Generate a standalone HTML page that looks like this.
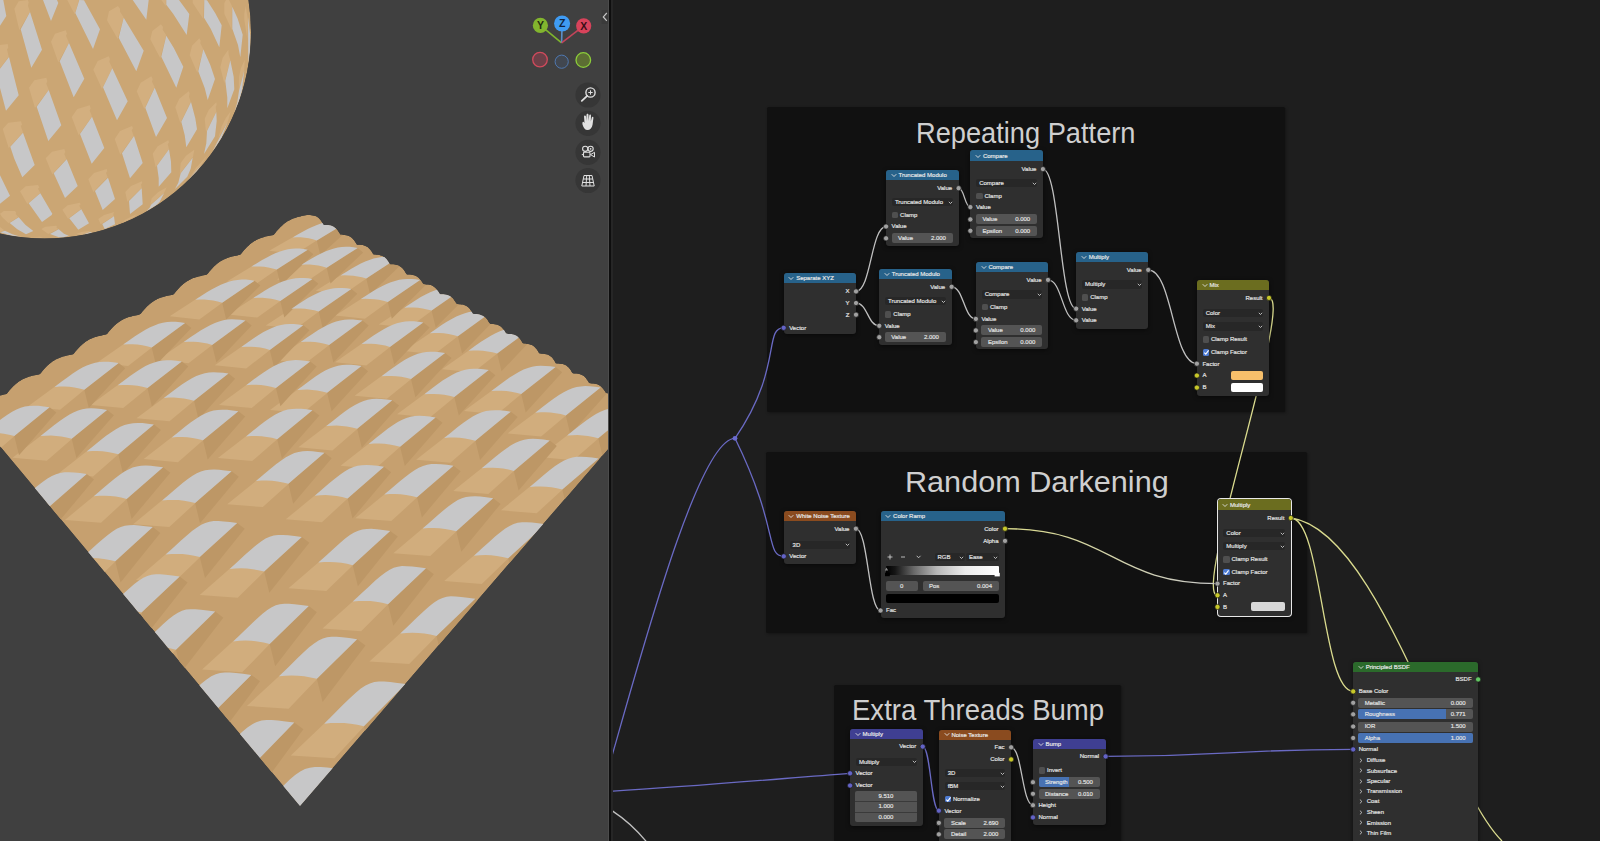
<!DOCTYPE html><html><head><meta charset="utf-8"><style>
html,body{margin:0;padding:0;width:1600px;height:841px;overflow:hidden;background:#1e1e1e;}
.t{position:absolute;white-space:nowrap;font-family:"Liberation Sans", sans-serif;line-height:1;-webkit-text-stroke:0.18px currentColor;}
.r{position:absolute;}
#vp{position:absolute;left:0;top:0;width:608px;height:841px;background:#404040;overflow:hidden;}
#ne{position:absolute;left:0;top:0;width:1600px;height:841px;}
.frame{position:absolute;background:#111111;border-radius:1.5px;box-shadow:1px 1px 3px rgba(0,0,0,0.35);}
.title{position:absolute;white-space:nowrap;font-family:"Liberation Sans", sans-serif;line-height:1;color:#cfcfcf;font-size:30px;transform-origin:0 0;}
</style></head><body>

<div id="vp"><svg width="608" height="841" viewBox="0 0 608 841" style="position:absolute;left:0;top:0">
<defs><clipPath id="pl"><path d="M-27.0 414.0 L-26.1 412.9 L-25.2 411.9 L-24.4 410.8 L-23.5 409.8 L-22.6 408.7 L-21.7 407.7 L-20.7 406.7 L-19.8 405.8 L-18.8 404.9 L-17.8 404.0 L-16.8 403.1 L-15.8 402.3 L-14.7 401.6 L-13.7 400.8 L-12.5 400.2 L-11.4 399.5 L-10.3 398.9 L-9.1 398.4 L-7.9 397.8 L-6.6 397.4 L-5.4 396.9 L-4.1 396.5 L-2.8 396.1 L-1.5 395.8 L-0.2 395.5 L1.1 395.2 L2.5 394.9 L3.8 394.6 L5.2 394.3 L6.5 394.0 L7.4 392.9 L8.2 391.9 L9.1 390.8 L10.0 389.8 L10.9 388.7 L11.8 387.7 L12.8 386.8 L13.7 385.8 L14.7 384.9 L15.7 384.0 L16.7 383.2 L17.7 382.4 L18.8 381.6 L19.9 380.9 L21.0 380.2 L22.1 379.5 L23.3 379.0 L24.4 378.4 L25.6 377.9 L26.9 377.4 L28.1 377.0 L29.4 376.6 L30.7 376.2 L32.0 375.8 L33.3 375.5 L34.7 375.2 L36.0 374.9 L37.4 374.7 L38.7 374.4 L40.0 374.0 L40.9 372.9 L41.7 371.9 L42.6 370.8 L43.5 369.8 L44.4 368.7 L45.3 367.7 L46.3 366.8 L47.2 365.8 L48.2 364.9 L49.2 364.0 L50.2 363.2 L51.2 362.4 L52.3 361.6 L53.4 360.9 L54.5 360.2 L55.6 359.6 L56.8 359.0 L58.0 358.4 L59.2 357.9 L60.4 357.5 L61.7 357.0 L62.9 356.6 L64.2 356.3 L65.5 355.9 L66.9 355.6 L68.2 355.3 L69.5 355.0 L70.9 354.7 L72.2 354.5 L73.5 354.0 L74.3 352.9 L75.2 351.8 L76.1 350.8 L77.0 349.8 L77.9 348.7 L78.8 347.7 L79.8 346.8 L80.7 345.8 L81.7 344.9 L82.7 344.0 L83.7 343.2 L84.7 342.4 L85.8 341.6 L86.9 340.9 L88.0 340.3 L89.1 339.6 L90.3 339.0 L91.5 338.5 L92.7 338.0 L93.9 337.5 L95.2 337.1 L96.5 336.7 L97.8 336.3 L99.1 336.0 L100.4 335.7 L101.7 335.4 L103.1 335.1 L104.4 334.8 L105.8 334.6 L107.0 334.0 L107.8 332.9 L108.7 331.8 L109.6 330.8 L110.5 329.7 L111.4 328.7 L112.3 327.7 L113.3 326.8 L114.2 325.8 L115.2 324.9 L116.2 324.0 L117.2 323.2 L118.2 322.4 L119.3 321.7 L120.4 321.0 L121.5 320.3 L122.6 319.7 L123.8 319.1 L125.0 318.5 L126.2 318.0 L127.5 317.6 L128.7 317.1 L130.0 316.8 L131.3 316.4 L132.6 316.0 L133.9 315.7 L135.3 315.4 L136.6 315.2 L138.0 314.9 L139.3 314.6 L140.4 314.0 L141.3 312.9 L142.2 311.8 L143.1 310.8 L144.0 309.7 L144.9 308.7 L145.8 307.7 L146.7 306.8 L147.7 305.8 L148.7 304.9 L149.7 304.1 L150.7 303.2 L151.7 302.4 L152.8 301.7 L153.9 301.0 L155.0 300.3 L156.2 299.7 L157.3 299.1 L158.5 298.6 L159.7 298.1 L161.0 297.6 L162.2 297.2 L163.5 296.8 L164.8 296.5 L166.1 296.1 L167.5 295.8 L168.8 295.5 L170.1 295.2 L171.5 295.0 L172.9 294.7 L173.9 294.0 L174.8 292.9 L175.7 291.8 L176.6 290.8 L177.5 289.7 L178.4 288.7 L179.3 287.7 L180.2 286.8 L181.2 285.8 L182.2 284.9 L183.2 284.1 L184.2 283.3 L185.2 282.5 L186.3 281.7 L187.4 281.0 L188.5 280.4 L189.7 279.7 L190.8 279.2 L192.0 278.6 L193.3 278.1 L194.5 277.7 L195.8 277.3 L197.0 276.9 L198.3 276.5 L199.7 276.2 L201.0 275.9 L202.3 275.6 L203.7 275.3 L205.0 275.0 L206.4 274.8 L207.4 274.0 L208.3 272.9 L209.2 271.8 L210.1 270.8 L211.0 269.7 L211.9 268.7 L212.8 267.7 L213.7 266.8 L214.7 265.8 L215.7 265.0 L216.7 264.1 L217.7 263.3 L218.7 262.5 L219.8 261.7 L220.9 261.1 L222.0 260.4 L223.2 259.8 L224.4 259.2 L225.6 258.7 L226.8 258.2 L228.0 257.7 L229.3 257.3 L230.6 256.9 L231.9 256.6 L233.2 256.3 L234.5 255.9 L235.9 255.7 L237.2 255.4 L238.6 255.1 L239.9 254.9 L240.9 253.9 L241.8 252.9 L242.7 251.8 L243.5 250.8 L244.4 249.7 L245.4 248.7 L246.3 247.7 L247.2 246.8 L248.2 245.9 L249.2 245.0 L250.2 244.1 L251.2 243.3 L252.3 242.5 L253.3 241.8 L254.4 241.1 L255.6 240.4 L256.7 239.8 L257.9 239.3 L259.1 238.7 L260.3 238.2 L261.6 237.8 L262.8 237.4 L264.1 237.0 L265.4 236.6 L266.7 236.3 L268.1 236.0 L269.4 235.7 L270.8 235.5 L272.1 235.2 L273.5 234.9 L274.4 233.9 L275.3 232.9 L276.1 231.8 L277.0 230.8 L277.9 229.7 L278.9 228.7 L279.8 227.7 L280.7 226.8 L281.7 225.9 L282.7 225.0 L283.7 224.1 L284.7 223.3 L285.8 222.5 L286.8 221.8 L287.9 221.1 L289.1 220.5 L290.2 219.9 L291.4 219.3 L292.6 218.8 L293.8 218.3 L295.1 217.9 L296.3 217.4 L297.6 217.1 L298.9 216.7 L300.3 216.4 L301.6 216.1 L302.9 215.8 L304.3 215.5 L305.6 215.3 L307.0 215.0 L307.0 215.0 L308.5 215.0 L310.0 215.1 L311.4 215.2 L312.8 215.4 L314.1 215.7 L315.4 216.1 L316.6 216.6 L317.7 217.3 L318.7 218.1 L319.6 219.0 L320.5 220.1 L321.4 221.2 L322.1 222.4 L322.9 223.7 L323.7 224.9 L325.2 224.9 L326.6 225.0 L328.1 225.1 L329.4 225.3 L330.8 225.6 L332.0 226.0 L333.2 226.6 L334.3 227.2 L335.3 228.1 L336.3 229.0 L337.2 230.0 L338.0 231.2 L338.8 232.4 L339.5 233.6 L340.3 234.8 L341.8 234.8 L343.3 234.9 L344.7 235.0 L346.1 235.2 L347.4 235.5 L348.7 236.0 L349.9 236.5 L351.0 237.2 L352.0 238.0 L352.9 238.9 L353.8 240.0 L354.6 241.1 L355.4 242.3 L356.2 243.6 L357.0 244.7 L358.5 244.7 L360.0 244.8 L361.4 244.9 L362.8 245.1 L364.1 245.5 L365.4 245.9 L366.5 246.4 L367.6 247.1 L368.6 247.9 L369.6 248.9 L370.5 249.9 L371.3 251.1 L372.1 252.3 L372.8 253.6 L373.7 254.6 L375.2 254.6 L376.6 254.7 L378.1 254.8 L379.4 255.1 L380.8 255.4 L382.0 255.8 L383.2 256.4 L384.3 257.1 L385.3 257.9 L386.2 258.8 L387.1 259.9 L387.9 261.0 L388.7 262.3 L389.4 263.5 L390.4 264.5 L391.9 264.5 L393.3 264.6 L394.7 264.8 L396.1 265.0 L397.4 265.3 L398.7 265.7 L399.8 266.3 L400.9 267.0 L401.9 267.8 L402.9 268.8 L403.7 269.8 L404.6 271.0 L405.3 272.2 L406.1 273.5 L407.0 274.4 L408.5 274.4 L410.0 274.5 L411.4 274.7 L412.8 274.9 L414.1 275.2 L415.3 275.7 L416.5 276.2 L417.6 276.9 L418.6 277.8 L419.5 278.7 L420.4 279.8 L421.2 281.0 L422.0 282.2 L422.7 283.5 L423.7 284.3 L425.2 284.4 L426.7 284.4 L428.1 284.6 L429.4 284.8 L430.8 285.1 L432.0 285.6 L433.2 286.2 L434.2 286.9 L435.2 287.7 L436.2 288.7 L437.0 289.8 L437.8 290.9 L438.6 292.1 L439.4 293.4 L440.4 294.2 L441.9 294.3 L443.3 294.3 L444.7 294.5 L446.1 294.7 L447.4 295.1 L448.7 295.5 L449.8 296.1 L450.9 296.8 L451.9 297.7 L452.8 298.6 L453.7 299.7 L454.5 300.9 L455.3 302.1 L456.0 303.4 L457.1 304.1 L458.5 304.2 L460.0 304.2 L461.4 304.4 L462.8 304.6 L464.1 305.0 L465.3 305.4 L466.5 306.0 L467.5 306.8 L468.5 307.6 L469.5 308.6 L470.3 309.7 L471.1 310.8 L471.9 312.1 L472.6 313.4 L473.7 314.0 L475.2 314.1 L476.7 314.1 L478.1 314.3 L479.5 314.5 L480.7 314.9 L482.0 315.4 L483.1 316.0 L484.2 316.7 L485.2 317.6 L486.1 318.5 L487.0 319.6 L487.8 320.8 L488.5 322.0 L489.3 323.3 L490.4 323.9 L491.9 324.0 L493.3 324.1 L494.8 324.2 L496.1 324.5 L497.4 324.8 L498.6 325.3 L499.8 325.9 L500.8 326.6 L501.8 327.5 L502.7 328.5 L503.6 329.6 L504.4 330.8 L505.2 332.0 L505.9 333.3 L507.1 333.8 L508.6 333.9 L510.0 334.0 L511.4 334.1 L512.8 334.4 L514.1 334.7 L515.3 335.2 L516.4 335.8 L517.5 336.6 L518.5 337.4 L519.4 338.4 L520.2 339.5 L521.0 340.7 L521.8 342.0 L522.5 343.2 L523.8 343.7 L525.2 343.8 L526.7 343.9 L528.1 344.0 L529.4 344.3 L530.7 344.7 L531.9 345.1 L533.1 345.8 L534.1 346.5 L535.1 347.4 L536.0 348.4 L536.9 349.5 L537.7 350.7 L538.4 351.9 L539.2 353.2 L540.4 353.6 L541.9 353.7 L543.4 353.8 L544.8 353.9 L546.1 354.2 L547.4 354.6 L548.6 355.1 L549.7 355.7 L550.8 356.5 L551.8 357.3 L552.7 358.3 L553.5 359.5 L554.3 360.6 L555.1 361.9 L555.8 363.2 L557.1 363.5 L558.6 363.6 L560.0 363.7 L561.4 363.9 L562.8 364.1 L564.1 364.5 L565.3 365.0 L566.4 365.6 L567.4 366.4 L568.4 367.3 L569.3 368.3 L570.2 369.4 L571.0 370.6 L571.7 371.9 L572.5 373.1 L573.8 373.4 L575.3 373.5 L576.7 373.6 L578.1 373.8 L579.4 374.0 L580.7 374.4 L581.9 374.9 L583.0 375.6 L584.1 376.3 L585.1 377.2 L586.0 378.3 L586.8 379.4 L587.6 380.6 L588.4 381.8 L589.1 383.1 L590.5 383.3 L591.9 383.4 L593.4 383.5 L594.8 383.7 L596.1 384.0 L597.4 384.3 L598.6 384.9 L599.7 385.5 L600.7 386.3 L601.7 387.2 L602.6 388.2 L603.4 389.3 L604.2 390.5 L605.0 391.8 L605.7 393.1 L607.1 393.2 L608.6 393.3 L610.0 393.4 L611.4 393.6 L612.8 393.9 L614.0 394.3 L615.2 394.8 L616.4 395.4 L617.4 396.2 L618.4 397.1 L619.3 398.2 L620.1 399.3 L620.9 400.5 L621.6 401.7 L622.4 403.0 L623.8 403.1 L625.3 403.2 L626.7 403.3 L628.1 403.5 L629.4 403.8 L630.7 404.2 L631.9 404.7 L633.0 405.4 L634.0 406.2 L635.0 407.1 L635.9 408.1 L636.7 409.2 L637.5 410.4 L638.3 411.7 L639.0 413.0 L300.0 806.0Z"/></clipPath><clipPath id="sp"><circle cx="44.6" cy="32.1" r="206.4"/></clipPath></defs>
<g clip-path="url(#sp)">
<circle cx="44.6" cy="32.1" r="206.4" fill="#cba674"/>
<path d="M29.7 237.3 43.0 238.0 40.3 236.7Z M90.0 230.7 81.3 232.0 76.3 234.0 80.7 235.0 89.0 232.3Z M0.0 227.0 0.0 232.0 4.3 230.3Z M58.3 229.0 56.3 227.3 57.0 226.7 56.3 225.7 45.3 226.7 41.3 229.0 48.3 234.0Z M137.0 214.0 124.7 220.0 122.7 222.7 134.0 217.0Z M114.3 212.0 104.0 215.0 98.3 219.0 100.7 224.3 113.7 216.3 113.3 213.7Z M0.0 213.7 2.0 217.0 8.7 223.3 18.3 217.0 15.7 214.0 16.3 212.7 15.0 211.0 3.7 211.0Z M79.7 202.7 67.7 205.3 62.3 209.7 68.0 218.7 81.0 209.0 79.3 205.7 80.7 204.3Z M177.0 189.7 163.7 200.3Z M166.7 187.3 158.0 192.3 151.7 198.3 150.0 205.0 164.0 193.0Z M38.0 185.0 25.7 186.3 20.0 191.3 27.3 204.0 40.3 193.0 38.0 188.7 39.3 187.3Z M142.0 181.3 131.0 186.0 125.3 192.0 127.3 201.7 141.7 188.0 141.0 184.3 142.3 183.0Z M106.7 169.0 94.0 173.0 88.3 179.3 93.3 192.0 107.7 177.3 106.0 173.0 107.3 171.3Z M207.0 155.7 196.0 167.7 190.0 177.3 202.3 163.3Z M194.3 149.7 186.0 155.7 180.7 163.0 179.7 174.0 193.0 157.0Z M64.3 149.0 52.0 151.7 45.7 158.3 52.3 174.3 66.3 159.0 64.3 154.0 65.3 152.0Z M168.3 140.3 157.7 146.3 152.7 153.7 155.7 167.3 169.0 149.0 167.7 144.3 169.0 142.3Z M132.0 126.0 120.0 131.0 114.7 139.0 120.3 154.7 133.7 136.0 131.7 130.3 133.0 128.3Z M21.0 121.3 8.3 122.7 2.7 129.0 8.7 148.0 23.0 132.3 20.7 126.0 22.0 124.7Z M230.7 111.3 225.7 118.3 221.7 126.3 218.0 139.3 228.0 121.0Z M89.7 105.3 77.3 109.0 71.7 117.0 78.7 135.3 92.0 116.3 89.7 110.7 90.7 108.3Z M216.3 102.3 208.7 110.0 204.7 118.7 206.0 132.3 216.3 111.7 215.7 106.7 216.7 104.7Z M188.7 91.3 179.3 98.7 175.3 107.3 180.3 123.0 190.7 101.7 189.0 96.7 189.7 93.3Z M46.3 77.7 34.3 80.3 29.0 87.7 35.0 108.0 48.7 89.7 46.3 83.7 47.3 81.0Z M151.3 76.3 140.7 82.7 136.7 91.3 144.3 109.0 154.7 87.3 152.0 81.7 152.7 79.0Z M244.7 59.7 241.0 68.0 239.0 76.7 238.7 91.3 244.3 70.0Z M108.7 56.3 97.7 61.0 93.3 69.7 102.0 89.0 112.3 68.0 109.3 61.7 110.0 59.0Z M228.3 49.7 222.7 57.7 220.3 67.3 224.3 83.3 230.3 60.0 228.7 54.7Z M7.7 44.0 0.0 45.0 0.0 68.3 8.7 56.7 7.0 49.3 8.3 47.7Z M199.3 38.3 192.0 45.7 189.7 55.3 197.3 72.7 203.3 49.0 200.3 43.3 200.7 40.7Z M65.7 30.3 55.0 33.7 51.0 41.7 58.3 62.3 69.0 42.7 66.0 35.7 67.0 33.7Z M161.0 24.3 152.3 31.0 150.3 39.3 160.3 58.3 166.3 35.3 162.7 29.7 163.0 27.0Z M245.7 6.0 244.3 13.3 244.3 19.7 247.3 38.7 248.0 20.3Z M118.0 6.0 109.0 11.3 107.0 20.3 117.7 39.0 123.7 17.3 120.0 11.7 120.0 8.7Z M226.0 0.0 224.3 3.3 224.3 13.7 231.7 29.7 232.0 6.0 229.0 0.0Z M192.7 0.0 192.7 3.0 203.3 19.0 204.0 0.0Z M161.3 0.0 165.7 6.0 166.0 0.0Z M67.3 0.0 74.7 14.3 79.0 0.0Z M27.7 0.0 18.7 1.3 14.3 8.7 19.3 30.0 30.0 11.7 28.0 5.7 28.7 2.3Z" fill="#d3af7f"/>
<path d="M92.0 232.7 90.0 232.0 82.3 234.7Z M0.3 232.3 10.0 235.3 20.7 236.7 12.3 234.3 5.0 230.7Z M50.0 234.0 59.0 237.3 63.3 237.3 68.7 235.7 64.0 233.7 58.7 229.3Z M9.7 223.0 17.3 229.3 26.0 234.3 33.3 231.0 25.3 224.7 18.7 217.3Z M114.0 216.3 102.3 224.0 104.7 229.0 115.0 224.3Z M81.3 209.3 69.3 218.3 78.3 229.7 89.0 223.3Z M164.0 193.3 151.0 204.7 149.7 207.7 146.3 211.3 156.3 205.0 159.7 201.7Z M40.3 193.3 28.7 203.3 42.0 222.0 51.7 215.0 52.3 213.7Z M141.7 188.3 129.0 201.0 130.0 214.0 142.7 204.3Z M108.0 177.7 95.0 191.0 102.7 210.0 115.0 199.0Z M0.0 175.3 0.0 203.7 10.0 195.7Z M202.3 163.7 188.3 179.7 196.0 172.0Z M66.7 159.3 53.7 173.3 65.0 198.0 77.7 186.0Z M192.7 157.7 180.7 173.3 178.3 182.7 175.0 189.0 187.3 176.7 190.7 168.7Z M169.0 149.3 157.0 165.7 158.7 178.0 158.7 186.7 171.3 172.3 171.0 161.7Z M134.0 136.0 122.0 153.3 130.0 178.3 142.7 163.0Z M23.0 132.7 10.3 146.7 14.3 158.7 22.3 177.3 34.7 165.0Z M228.0 121.3 212.3 151.7 221.3 138.0Z M92.0 116.7 80.0 134.0 91.7 163.7 104.3 148.0Z M216.3 112.0 207.0 131.0 206.3 143.3 204.0 154.0 215.0 136.3 216.7 121.0Z M191.0 102.0 181.3 121.7 184.7 135.0 186.3 147.3 197.0 129.3 195.3 118.3Z M48.7 90.0 36.7 106.7 48.3 141.0 61.3 125.3Z M154.7 87.7 145.3 107.7 156.0 137.0 167.0 118.0Z M244.3 70.3 239.0 90.7 237.3 102.3 234.3 112.3 239.7 98.7 242.0 90.0Z M112.3 68.3 103.0 87.3 117.0 120.3 127.7 101.3Z M230.3 60.3 225.3 80.7 227.3 97.7 227.3 108.3 234.3 89.3 233.7 76.7Z M9.0 57.0 0.0 68.7 0.0 88.0 6.0 110.7 18.7 95.3Z M203.3 49.3 198.3 71.3 204.7 88.0 207.7 100.0 215.0 79.0 210.3 65.0Z M69.0 43.0 59.7 61.3 73.7 97.3 84.3 78.7Z M166.3 35.7 161.3 56.7 176.3 87.7 183.3 66.7 173.7 47.7Z M123.7 17.7 118.7 37.7 136.3 71.3 143.7 50.7Z M248.0 17.0 248.3 63.0 250.0 49.7 250.3 36.0Z M30.0 12.0 20.7 29.3 31.3 67.7 42.0 49.7Z M232.3 6.7 232.3 28.7 238.0 45.0 240.3 57.3 242.7 34.7 237.7 18.7Z M204.3 0.0 204.0 17.7 210.7 28.7 219.3 47.3 221.7 25.3 215.3 13.3 207.0 0.3Z M166.3 0.0 166.3 4.7 173.3 14.0 186.7 35.0 189.3 14.0 179.0 0.0Z M132.7 0.0 146.3 19.7 148.7 0.0Z M79.3 0.0 75.3 13.0 93.0 49.0 100.0 29.3 84.0 0.3Z M43.0 0.0 51.0 21.0 58.3 3.0 57.0 0.0Z M3.3 0.0 0.0 0.0 0.0 25.7 6.3 16.0Z" fill="#c7c7c8"/>
</g>
<g clip-path="url(#pl)">
<path d="M-27.0 414.0 L-26.1 412.9 L-25.2 411.9 L-24.4 410.8 L-23.5 409.8 L-22.6 408.7 L-21.7 407.7 L-20.7 406.7 L-19.8 405.8 L-18.8 404.9 L-17.8 404.0 L-16.8 403.1 L-15.8 402.3 L-14.7 401.6 L-13.7 400.8 L-12.5 400.2 L-11.4 399.5 L-10.3 398.9 L-9.1 398.4 L-7.9 397.8 L-6.6 397.4 L-5.4 396.9 L-4.1 396.5 L-2.8 396.1 L-1.5 395.8 L-0.2 395.5 L1.1 395.2 L2.5 394.9 L3.8 394.6 L5.2 394.3 L6.5 394.0 L7.4 392.9 L8.2 391.9 L9.1 390.8 L10.0 389.8 L10.9 388.7 L11.8 387.7 L12.8 386.8 L13.7 385.8 L14.7 384.9 L15.7 384.0 L16.7 383.2 L17.7 382.4 L18.8 381.6 L19.9 380.9 L21.0 380.2 L22.1 379.5 L23.3 379.0 L24.4 378.4 L25.6 377.9 L26.9 377.4 L28.1 377.0 L29.4 376.6 L30.7 376.2 L32.0 375.8 L33.3 375.5 L34.7 375.2 L36.0 374.9 L37.4 374.7 L38.7 374.4 L40.0 374.0 L40.9 372.9 L41.7 371.9 L42.6 370.8 L43.5 369.8 L44.4 368.7 L45.3 367.7 L46.3 366.8 L47.2 365.8 L48.2 364.9 L49.2 364.0 L50.2 363.2 L51.2 362.4 L52.3 361.6 L53.4 360.9 L54.5 360.2 L55.6 359.6 L56.8 359.0 L58.0 358.4 L59.2 357.9 L60.4 357.5 L61.7 357.0 L62.9 356.6 L64.2 356.3 L65.5 355.9 L66.9 355.6 L68.2 355.3 L69.5 355.0 L70.9 354.7 L72.2 354.5 L73.5 354.0 L74.3 352.9 L75.2 351.8 L76.1 350.8 L77.0 349.8 L77.9 348.7 L78.8 347.7 L79.8 346.8 L80.7 345.8 L81.7 344.9 L82.7 344.0 L83.7 343.2 L84.7 342.4 L85.8 341.6 L86.9 340.9 L88.0 340.3 L89.1 339.6 L90.3 339.0 L91.5 338.5 L92.7 338.0 L93.9 337.5 L95.2 337.1 L96.5 336.7 L97.8 336.3 L99.1 336.0 L100.4 335.7 L101.7 335.4 L103.1 335.1 L104.4 334.8 L105.8 334.6 L107.0 334.0 L107.8 332.9 L108.7 331.8 L109.6 330.8 L110.5 329.7 L111.4 328.7 L112.3 327.7 L113.3 326.8 L114.2 325.8 L115.2 324.9 L116.2 324.0 L117.2 323.2 L118.2 322.4 L119.3 321.7 L120.4 321.0 L121.5 320.3 L122.6 319.7 L123.8 319.1 L125.0 318.5 L126.2 318.0 L127.5 317.6 L128.7 317.1 L130.0 316.8 L131.3 316.4 L132.6 316.0 L133.9 315.7 L135.3 315.4 L136.6 315.2 L138.0 314.9 L139.3 314.6 L140.4 314.0 L141.3 312.9 L142.2 311.8 L143.1 310.8 L144.0 309.7 L144.9 308.7 L145.8 307.7 L146.7 306.8 L147.7 305.8 L148.7 304.9 L149.7 304.1 L150.7 303.2 L151.7 302.4 L152.8 301.7 L153.9 301.0 L155.0 300.3 L156.2 299.7 L157.3 299.1 L158.5 298.6 L159.7 298.1 L161.0 297.6 L162.2 297.2 L163.5 296.8 L164.8 296.5 L166.1 296.1 L167.5 295.8 L168.8 295.5 L170.1 295.2 L171.5 295.0 L172.9 294.7 L173.9 294.0 L174.8 292.9 L175.7 291.8 L176.6 290.8 L177.5 289.7 L178.4 288.7 L179.3 287.7 L180.2 286.8 L181.2 285.8 L182.2 284.9 L183.2 284.1 L184.2 283.3 L185.2 282.5 L186.3 281.7 L187.4 281.0 L188.5 280.4 L189.7 279.7 L190.8 279.2 L192.0 278.6 L193.3 278.1 L194.5 277.7 L195.8 277.3 L197.0 276.9 L198.3 276.5 L199.7 276.2 L201.0 275.9 L202.3 275.6 L203.7 275.3 L205.0 275.0 L206.4 274.8 L207.4 274.0 L208.3 272.9 L209.2 271.8 L210.1 270.8 L211.0 269.7 L211.9 268.7 L212.8 267.7 L213.7 266.8 L214.7 265.8 L215.7 265.0 L216.7 264.1 L217.7 263.3 L218.7 262.5 L219.8 261.7 L220.9 261.1 L222.0 260.4 L223.2 259.8 L224.4 259.2 L225.6 258.7 L226.8 258.2 L228.0 257.7 L229.3 257.3 L230.6 256.9 L231.9 256.6 L233.2 256.3 L234.5 255.9 L235.9 255.7 L237.2 255.4 L238.6 255.1 L239.9 254.9 L240.9 253.9 L241.8 252.9 L242.7 251.8 L243.5 250.8 L244.4 249.7 L245.4 248.7 L246.3 247.7 L247.2 246.8 L248.2 245.9 L249.2 245.0 L250.2 244.1 L251.2 243.3 L252.3 242.5 L253.3 241.8 L254.4 241.1 L255.6 240.4 L256.7 239.8 L257.9 239.3 L259.1 238.7 L260.3 238.2 L261.6 237.8 L262.8 237.4 L264.1 237.0 L265.4 236.6 L266.7 236.3 L268.1 236.0 L269.4 235.7 L270.8 235.5 L272.1 235.2 L273.5 234.9 L274.4 233.9 L275.3 232.9 L276.1 231.8 L277.0 230.8 L277.9 229.7 L278.9 228.7 L279.8 227.7 L280.7 226.8 L281.7 225.9 L282.7 225.0 L283.7 224.1 L284.7 223.3 L285.8 222.5 L286.8 221.8 L287.9 221.1 L289.1 220.5 L290.2 219.9 L291.4 219.3 L292.6 218.8 L293.8 218.3 L295.1 217.9 L296.3 217.4 L297.6 217.1 L298.9 216.7 L300.3 216.4 L301.6 216.1 L302.9 215.8 L304.3 215.5 L305.6 215.3 L307.0 215.0 L307.0 215.0 L308.5 215.0 L310.0 215.1 L311.4 215.2 L312.8 215.4 L314.1 215.7 L315.4 216.1 L316.6 216.6 L317.7 217.3 L318.7 218.1 L319.6 219.0 L320.5 220.1 L321.4 221.2 L322.1 222.4 L322.9 223.7 L323.7 224.9 L325.2 224.9 L326.6 225.0 L328.1 225.1 L329.4 225.3 L330.8 225.6 L332.0 226.0 L333.2 226.6 L334.3 227.2 L335.3 228.1 L336.3 229.0 L337.2 230.0 L338.0 231.2 L338.8 232.4 L339.5 233.6 L340.3 234.8 L341.8 234.8 L343.3 234.9 L344.7 235.0 L346.1 235.2 L347.4 235.5 L348.7 236.0 L349.9 236.5 L351.0 237.2 L352.0 238.0 L352.9 238.9 L353.8 240.0 L354.6 241.1 L355.4 242.3 L356.2 243.6 L357.0 244.7 L358.5 244.7 L360.0 244.8 L361.4 244.9 L362.8 245.1 L364.1 245.5 L365.4 245.9 L366.5 246.4 L367.6 247.1 L368.6 247.9 L369.6 248.9 L370.5 249.9 L371.3 251.1 L372.1 252.3 L372.8 253.6 L373.7 254.6 L375.2 254.6 L376.6 254.7 L378.1 254.8 L379.4 255.1 L380.8 255.4 L382.0 255.8 L383.2 256.4 L384.3 257.1 L385.3 257.9 L386.2 258.8 L387.1 259.9 L387.9 261.0 L388.7 262.3 L389.4 263.5 L390.4 264.5 L391.9 264.5 L393.3 264.6 L394.7 264.8 L396.1 265.0 L397.4 265.3 L398.7 265.7 L399.8 266.3 L400.9 267.0 L401.9 267.8 L402.9 268.8 L403.7 269.8 L404.6 271.0 L405.3 272.2 L406.1 273.5 L407.0 274.4 L408.5 274.4 L410.0 274.5 L411.4 274.7 L412.8 274.9 L414.1 275.2 L415.3 275.7 L416.5 276.2 L417.6 276.9 L418.6 277.8 L419.5 278.7 L420.4 279.8 L421.2 281.0 L422.0 282.2 L422.7 283.5 L423.7 284.3 L425.2 284.4 L426.7 284.4 L428.1 284.6 L429.4 284.8 L430.8 285.1 L432.0 285.6 L433.2 286.2 L434.2 286.9 L435.2 287.7 L436.2 288.7 L437.0 289.8 L437.8 290.9 L438.6 292.1 L439.4 293.4 L440.4 294.2 L441.9 294.3 L443.3 294.3 L444.7 294.5 L446.1 294.7 L447.4 295.1 L448.7 295.5 L449.8 296.1 L450.9 296.8 L451.9 297.7 L452.8 298.6 L453.7 299.7 L454.5 300.9 L455.3 302.1 L456.0 303.4 L457.1 304.1 L458.5 304.2 L460.0 304.2 L461.4 304.4 L462.8 304.6 L464.1 305.0 L465.3 305.4 L466.5 306.0 L467.5 306.8 L468.5 307.6 L469.5 308.6 L470.3 309.7 L471.1 310.8 L471.9 312.1 L472.6 313.4 L473.7 314.0 L475.2 314.1 L476.7 314.1 L478.1 314.3 L479.5 314.5 L480.7 314.9 L482.0 315.4 L483.1 316.0 L484.2 316.7 L485.2 317.6 L486.1 318.5 L487.0 319.6 L487.8 320.8 L488.5 322.0 L489.3 323.3 L490.4 323.9 L491.9 324.0 L493.3 324.1 L494.8 324.2 L496.1 324.5 L497.4 324.8 L498.6 325.3 L499.8 325.9 L500.8 326.6 L501.8 327.5 L502.7 328.5 L503.6 329.6 L504.4 330.8 L505.2 332.0 L505.9 333.3 L507.1 333.8 L508.6 333.9 L510.0 334.0 L511.4 334.1 L512.8 334.4 L514.1 334.7 L515.3 335.2 L516.4 335.8 L517.5 336.6 L518.5 337.4 L519.4 338.4 L520.2 339.5 L521.0 340.7 L521.8 342.0 L522.5 343.2 L523.8 343.7 L525.2 343.8 L526.7 343.9 L528.1 344.0 L529.4 344.3 L530.7 344.7 L531.9 345.1 L533.1 345.8 L534.1 346.5 L535.1 347.4 L536.0 348.4 L536.9 349.5 L537.7 350.7 L538.4 351.9 L539.2 353.2 L540.4 353.6 L541.9 353.7 L543.4 353.8 L544.8 353.9 L546.1 354.2 L547.4 354.6 L548.6 355.1 L549.7 355.7 L550.8 356.5 L551.8 357.3 L552.7 358.3 L553.5 359.5 L554.3 360.6 L555.1 361.9 L555.8 363.2 L557.1 363.5 L558.6 363.6 L560.0 363.7 L561.4 363.9 L562.8 364.1 L564.1 364.5 L565.3 365.0 L566.4 365.6 L567.4 366.4 L568.4 367.3 L569.3 368.3 L570.2 369.4 L571.0 370.6 L571.7 371.9 L572.5 373.1 L573.8 373.4 L575.3 373.5 L576.7 373.6 L578.1 373.8 L579.4 374.0 L580.7 374.4 L581.9 374.9 L583.0 375.6 L584.1 376.3 L585.1 377.2 L586.0 378.3 L586.8 379.4 L587.6 380.6 L588.4 381.8 L589.1 383.1 L590.5 383.3 L591.9 383.4 L593.4 383.5 L594.8 383.7 L596.1 384.0 L597.4 384.3 L598.6 384.9 L599.7 385.5 L600.7 386.3 L601.7 387.2 L602.6 388.2 L603.4 389.3 L604.2 390.5 L605.0 391.8 L605.7 393.1 L607.1 393.2 L608.6 393.3 L610.0 393.4 L611.4 393.6 L612.8 393.9 L614.0 394.3 L615.2 394.8 L616.4 395.4 L617.4 396.2 L618.4 397.1 L619.3 398.2 L620.1 399.3 L620.9 400.5 L621.6 401.7 L622.4 403.0 L623.8 403.1 L625.3 403.2 L626.7 403.3 L628.1 403.5 L629.4 403.8 L630.7 404.2 L631.9 404.7 L633.0 405.4 L634.0 406.2 L635.0 407.1 L635.9 408.1 L636.7 409.2 L637.5 410.4 L638.3 411.7 L639.0 413.0 L300.0 806.0Z" fill="#c6a06f"/>
<path d="M269.2 250.8 L295.6 254.1 L319.8 238.6 L295.8 235.6Z M226.9 281.4 L254.8 284.7 L279.9 267.6 L254.5 264.7Z M169.7 316.2 L199.3 319.5 L225.4 300.6 L198.5 297.6Z M277.0 279.4 L304.8 282.7 L329.8 265.7 L304.6 262.8Z M227.9 314.4 L257.4 317.6 L283.5 298.8 L256.6 295.8Z M315.7 290.8 L344.0 294.0 L369.4 276.4 L343.6 273.5Z M265.7 325.4 L295.7 328.7 L322.0 309.3 L294.8 306.4Z M335.3 315.5 L364.9 318.7 L391.0 299.8 L364.2 296.9Z M227.2 504.2 L262.8 507.1 L292.0 480.7 L259.6 478.0Z M285.8 519.3 L321.9 522.2 L351.2 495.2 L318.4 492.5Z M355.3 518.2 L391.3 521.1 L420.7 494.1 L387.9 491.4Z M393.3 553.3 L430.2 556.1 L460.0 527.9 L426.4 525.3Z M444.2 581.1 L481.8 584.0 L511.9 554.9 L477.7 552.3Z M453.2 490.9 L488.4 493.9 L517.4 467.9 L485.4 465.2Z M199.7 594.9 L237.7 597.7 L267.9 568.1 L233.4 565.6Z M288.5 588.3 L326.3 591.1 L356.5 561.8 L322.1 559.2Z M322.5 628.4 L361.2 631.2 L391.8 600.6 L356.6 598.1Z M369.4 661.4 L409.2 664.1 L440.3 632.3 L404.2 629.8Z M202.1 669.5 L242.2 672.3 L273.6 640.1 L237.1 637.6Z M246.9 705.9 L288.6 708.7 L320.9 674.9 L283.0 672.4Z M219.9 849.8 L267.6 852.5 L303.7 812.2 L260.3 809.7Z M290.8 755.4 L334.5 758.2 L368.1 722.1 L328.4 719.6Z M175.1 797.9 L220.6 800.6 L255.3 762.6 L213.9 760.1Z M137.2 745.3 L180.5 748.1 L213.9 712.4 L174.5 709.9Z M107.9 675.6 L148.3 678.3 L179.9 645.8 L143.2 643.3Z M75.8 637.1 L114.7 639.9 L145.3 609.0 L110.0 606.5Z M51.2 584.3 L88.9 587.1 L119.1 557.9 L84.8 555.3Z M96.9 362.8 L128.1 365.9 L155.1 345.0 L126.7 342.1Z M157.4 360.1 L188.5 363.3 L215.5 342.5 L187.1 339.6Z M27.4 406.7 L60.1 409.8 L87.8 387.0 L58.1 384.2Z M90.6 405.0 L123.2 408.1 L150.9 385.4 L121.2 382.6Z M136.5 418.2 L169.5 421.3 L197.4 398.1 L167.4 395.3Z M219.0 404.9 L251.7 408.0 L279.3 385.3 L249.7 382.5Z M-44.8 454.8 L-10.6 457.8 L17.8 433.2 L-13.2 430.4Z M12.5 457.7 L46.8 460.7 L75.3 435.9 L44.1 433.2Z M58.4 473.6 L93.1 476.6 L121.9 451.3 L90.3 448.5Z M143.7 459.1 L178.0 462.2 L206.5 437.3 L175.3 434.6Z M217.9 458.0 L252.2 461.1 L280.7 436.3 L249.6 433.5Z M-11.9 527.1 L24.4 530.0 L53.8 502.7 L20.9 500.1Z M64.9 519.9 L101.0 522.8 L130.3 495.8 L97.6 493.1Z M133.1 524.2 L169.3 527.1 L198.7 499.9 L165.8 497.3Z M135.9 579.9 L173.5 582.8 L203.6 553.7 L169.4 551.1Z M378.7 324.4 L408.6 327.7 L434.9 308.4 L407.7 305.5Z M274.4 360.2 L305.5 363.3 L332.5 342.5 L304.1 339.6Z M335.1 362.2 L366.3 365.4 L393.3 344.4 L364.9 341.6Z M403.6 351.0 L434.4 354.2 L461.2 333.8 L433.2 330.9Z M442.0 369.2 L473.5 372.3 L500.5 351.1 L472.0 348.2Z M354.6 395.7 L386.9 398.8 L414.4 376.5 L385.0 373.6Z M397.0 414.3 L429.9 417.4 L457.7 394.4 L427.8 391.6Z M464.0 411.1 L496.9 414.2 L524.7 391.3 L494.8 388.5Z M507.6 433.4 L541.1 436.5 L569.3 412.7 L538.8 409.9Z M270.0 410.0 L302.8 413.1 L330.6 390.2 L300.8 387.3Z M298.4 447.3 L332.4 450.4 L360.7 426.0 L329.8 423.2Z M340.5 465.8 L375.0 468.9 L403.6 443.8 L372.2 441.0Z M416.1 459.7 L450.4 462.7 L479.0 437.8 L447.7 435.1Z M539.1 457.1 L573.3 460.2 L601.8 435.4 L570.7 432.7Z M500.9 510.3 L536.7 513.2 L565.9 486.5 L533.4 483.8Z M214.8 365.3 L246.2 368.5 L273.2 347.4 L244.7 344.5Z" fill="#d1ad7d"/>
<path d="M346.6 222.4 L351.9 226.6 L320.4 255.3 L316.8 240.4Z M307.8 249.7 L313.4 254.2 L280.6 285.4 L276.8 269.6Z M254.5 280.7 L260.4 285.4 L226.2 319.5 L222.2 302.8Z M357.7 247.9 L363.2 252.4 L330.5 283.4 L326.7 267.7Z M312.5 279.0 L318.4 283.7 L284.3 317.6 L280.3 301.0Z M397.6 258.0 L403.3 262.5 L370.1 294.5 L366.3 278.5Z M351.3 289.0 L357.3 293.8 L322.8 328.5 L318.7 311.6Z M420.1 280.0 L426.0 284.7 L391.8 318.7 L387.8 302.0Z M324.5 452.7 L331.7 458.2 L293.2 503.7 L288.4 483.8Z M384.0 466.7 L391.2 472.2 L352.5 518.5 L347.6 498.4Z M453.5 465.7 L460.7 471.2 L421.9 517.4 L417.0 497.3Z M493.2 498.2 L500.6 503.9 L461.3 551.8 L456.3 531.2Z M545.6 524.2 L553.1 529.9 L513.3 579.2 L508.2 558.3Z M549.8 440.5 L556.8 445.9 L518.6 490.6 L513.8 470.9Z M301.8 537.0 L309.3 542.7 L269.3 592.7 L264.2 571.6Z M390.2 530.9 L397.8 536.6 L357.9 586.3 L352.7 565.2Z M426.0 568.3 L433.8 574.2 L393.3 625.7 L388.0 604.2Z M475.3 598.7 L483.2 604.7 L441.9 658.2 L436.5 636.0Z M308.8 606.1 L316.8 612.2 L275.2 666.2 L269.7 643.9Z M357.1 639.2 L365.5 645.4 L322.6 702.0 L316.9 678.8Z M344.2 769.6 L353.7 776.7 L305.7 843.4 L299.2 816.9Z M405.8 684.0 L414.6 690.5 L369.9 750.6 L363.9 726.3Z M294.3 722.5 L303.4 729.3 L257.2 792.3 L251.0 767.1Z M251.3 674.9 L260.0 681.3 L215.6 740.7 L209.7 716.6Z M215.2 611.6 L223.3 617.7 L181.5 672.1 L176.0 649.7Z M179.7 576.5 L187.5 582.4 L146.8 634.3 L141.5 612.6Z M152.8 527.1 L160.3 532.9 L120.5 582.4 L115.3 561.3Z M185.1 323.0 L191.4 327.9 L156.0 365.0 L151.7 347.4Z M245.5 320.6 L251.7 325.5 L216.4 362.4 L212.1 344.9Z M118.7 363.1 L125.2 368.2 L88.8 408.0 L84.3 389.7Z M181.8 361.6 L188.3 366.6 L151.9 406.4 L147.5 388.1Z M228.5 373.6 L235.1 378.8 L198.5 419.3 L194.0 400.8Z M310.2 361.5 L316.7 366.6 L280.4 406.3 L275.9 388.0Z M49.6 407.2 L56.4 412.5 L19.0 455.2 L14.3 436.0Z M107.1 409.9 L113.9 415.2 L76.4 458.0 L71.7 438.8Z M153.9 424.5 L160.9 429.9 L123.0 473.7 L118.3 454.2Z M238.4 411.2 L245.2 416.5 L207.7 459.4 L203.0 440.2Z M312.5 410.2 L319.4 415.5 L281.9 458.4 L277.2 439.2Z M86.7 473.9 L94.0 479.5 L55.1 526.1 L50.1 505.9Z M163.1 467.3 L170.3 472.8 L131.6 519.1 L126.7 498.9Z M231.6 471.3 L238.8 476.8 L200.0 523.3 L195.1 503.1Z M237.2 523.1 L244.7 528.8 L205.0 578.1 L199.8 557.1Z M464.1 288.1 L470.1 292.9 L435.7 327.5 L431.6 310.6Z M362.5 320.6 L368.7 325.5 L333.4 362.4 L329.1 344.9Z M423.3 322.4 L429.6 327.4 L394.2 364.4 L389.9 346.9Z M491.0 312.3 L497.2 317.1 L462.1 353.5 L457.9 336.2Z M530.7 328.8 L537.0 333.7 L501.5 371.3 L497.2 353.6Z M445.1 353.0 L451.6 358.0 L415.4 397.2 L411.0 379.1Z M488.8 370.1 L495.4 375.2 L458.8 415.5 L454.3 397.1Z M555.6 367.1 L562.2 372.2 L525.7 412.4 L521.2 394.0Z M600.6 387.6 L607.4 392.8 L570.3 434.2 L565.8 415.5Z M361.5 366.1 L368.1 371.2 L331.6 411.2 L327.1 392.8Z M392.3 400.3 L399.1 405.6 L361.8 447.8 L357.2 428.8Z M435.6 417.4 L442.5 422.7 L404.8 466.0 L400.1 446.7Z M510.8 411.7 L517.7 417.0 L480.1 460.0 L475.4 440.8Z M633.6 409.4 L640.5 414.7 L602.9 457.5 L598.3 438.3Z M598.6 458.4 L605.7 463.9 L567.2 509.6 L562.3 489.6Z M303.3 325.3 L309.5 330.2 L274.1 367.5 L269.8 349.9Z" fill="#bd9766"/>
<path d="M292.8 237.4 L298.1 234.3 L303.1 231.5 L307.7 229.1 L312.1 227.0 L316.3 225.2 L320.2 223.7 L324.1 222.6 L327.8 221.8 L331.5 221.3 L335.2 221.2 L338.9 221.3 L342.7 221.7 L346.6 222.4 L316.8 240.4 L312.8 239.2 L308.8 238.3 L304.8 237.7 L300.8 237.3 L296.8 237.3Z M251.4 266.6 L256.9 263.2 L262.1 260.1 L266.9 257.4 L271.5 255.0 L275.8 253.1 L280.0 251.5 L284.0 250.2 L288.0 249.3 L291.8 248.8 L295.7 248.5 L299.6 248.6 L303.6 249.0 L307.8 249.7 L276.8 269.6 L272.5 268.4 L268.3 267.5 L264.1 266.8 L259.8 266.5 L255.6 266.4Z M195.3 299.8 L201.0 296.0 L206.4 292.5 L211.5 289.5 L216.3 286.9 L220.8 284.8 L225.2 283.0 L229.4 281.6 L233.6 280.5 L237.6 279.9 L241.7 279.6 L245.9 279.6 L250.1 280.0 L254.5 280.7 L222.2 302.8 L217.7 301.5 L213.2 300.6 L208.7 299.9 L204.2 299.6 L199.8 299.6Z M301.5 264.7 L307.0 261.3 L312.1 258.2 L317.0 255.5 L321.5 253.2 L325.8 251.3 L330.0 249.7 L334.0 248.4 L337.9 247.5 L341.8 247.0 L345.7 246.7 L349.6 246.8 L353.6 247.2 L357.7 247.9 L326.7 267.7 L322.5 266.5 L318.3 265.6 L314.1 264.9 L309.9 264.6 L305.7 264.5Z M253.4 298.0 L259.2 294.2 L264.6 290.8 L269.6 287.8 L274.4 285.2 L278.9 283.1 L283.3 281.3 L287.5 279.9 L291.6 278.9 L295.7 278.2 L299.8 277.9 L303.9 277.9 L308.1 278.3 L312.5 279.0 L280.3 301.0 L275.8 299.7 L271.3 298.8 L266.8 298.2 L262.4 297.8 L257.9 297.8Z M340.5 275.5 L346.1 272.0 L351.3 268.8 L356.2 266.0 L360.8 263.6 L365.2 261.6 L369.4 259.9 L373.5 258.6 L377.5 257.7 L381.4 257.1 L385.4 256.8 L389.4 256.9 L393.4 257.3 L397.6 258.0 L366.3 278.5 L362.0 277.3 L357.7 276.4 L353.4 275.7 L349.1 275.4 L344.8 275.3Z M291.5 308.7 L297.4 304.7 L302.8 301.2 L307.9 298.1 L312.7 295.4 L317.3 293.2 L321.7 291.3 L325.9 289.9 L330.0 288.9 L334.2 288.2 L338.3 287.9 L342.5 287.9 L346.8 288.3 L351.3 289.0 L318.7 311.6 L314.2 310.3 L309.6 309.4 L305.1 308.8 L300.6 308.4 L296.0 308.4Z M360.9 299.1 L366.7 295.2 L372.1 291.8 L377.1 288.8 L381.9 286.2 L386.5 284.1 L390.8 282.3 L395.0 280.9 L399.2 279.8 L403.3 279.2 L407.3 278.9 L411.5 278.9 L415.7 279.3 L420.1 280.0 L387.8 302.0 L383.3 300.8 L378.8 299.8 L374.4 299.2 L369.9 298.9 L365.4 298.8Z M256.0 481.1 L263.6 474.6 L270.2 469.0 L276.0 464.3 L281.2 460.5 L285.9 457.3 L290.2 454.9 L294.4 453.1 L298.5 451.9 L302.8 451.3 L307.4 451.1 L312.5 451.3 L318.1 451.9 L324.5 452.7 L288.4 483.8 L283.0 482.4 L277.6 481.4 L272.2 480.8 L266.8 480.5 L261.4 480.6Z M314.8 495.7 L322.5 489.0 L329.2 483.3 L335.1 478.4 L340.3 474.5 L345.0 471.3 L349.3 468.8 L353.5 467.0 L357.6 465.8 L361.9 465.2 L366.5 465.0 L371.6 465.2 L377.4 465.8 L384.0 466.7 L347.6 498.4 L342.1 497.0 L336.6 496.0 L331.2 495.4 L325.7 495.1 L320.3 495.2Z M384.3 494.6 L392.0 487.9 L398.7 482.2 L404.6 477.4 L409.8 473.4 L414.5 470.2 L418.8 467.8 L423.0 466.0 L427.1 464.8 L431.4 464.1 L436.0 463.9 L441.1 464.2 L446.9 464.8 L453.5 465.7 L417.0 497.3 L411.6 495.9 L406.1 494.9 L400.7 494.3 L395.2 494.0 L389.8 494.1Z M422.7 528.6 L430.7 521.4 L437.7 515.3 L443.6 510.2 L448.9 506.0 L453.5 502.7 L457.8 500.1 L461.9 498.3 L466.0 497.1 L470.3 496.5 L475.0 496.3 L480.3 496.6 L486.3 497.3 L493.2 498.2 L456.3 531.2 L450.7 529.9 L445.1 528.9 L439.5 528.3 L433.9 528.0 L428.3 528.1Z M474.0 555.7 L482.3 548.1 L489.4 541.7 L495.4 536.3 L500.7 531.9 L505.3 528.5 L509.6 525.9 L513.6 524.0 L517.7 522.8 L522.0 522.3 L526.7 522.2 L532.1 522.5 L538.3 523.2 L545.6 524.2 L508.2 558.3 L502.5 556.9 L496.8 555.9 L491.1 555.3 L485.4 555.0 L479.7 555.2Z M481.8 468.2 L489.2 461.9 L495.8 456.5 L501.5 452.0 L506.7 448.2 L511.4 445.1 L515.7 442.7 L519.9 440.9 L524.1 439.7 L528.4 439.1 L532.9 438.8 L537.9 439.0 L543.5 439.6 L549.8 440.5 L513.8 470.9 L508.5 469.6 L503.1 468.6 L497.8 468.0 L492.4 467.7 L487.1 467.8Z M229.7 569.0 L238.1 561.2 L245.3 554.6 L251.4 549.2 L256.7 544.7 L261.4 541.2 L265.6 538.6 L269.7 536.7 L273.7 535.6 L278.0 535.0 L282.8 534.9 L288.1 535.3 L294.4 536.0 L301.8 537.0 L264.2 571.6 L258.4 570.2 L252.7 569.2 L246.9 568.6 L241.2 568.3 L235.4 568.5Z M318.4 562.6 L326.8 554.9 L333.9 548.4 L340.0 543.0 L345.2 538.6 L349.9 535.1 L354.1 532.5 L358.2 530.7 L362.3 529.5 L366.6 528.9 L371.3 528.8 L376.7 529.2 L382.9 529.9 L390.2 530.9 L352.7 565.2 L347.0 563.8 L341.3 562.8 L335.5 562.2 L329.8 562.0 L324.1 562.1Z M352.8 601.6 L361.6 593.3 L369.0 586.4 L375.3 580.6 L380.7 576.0 L385.4 572.4 L389.7 569.7 L393.7 567.8 L397.8 566.7 L402.0 566.1 L406.8 566.2 L412.2 566.6 L418.6 567.3 L426.0 568.3 L388.0 604.2 L382.1 602.8 L376.2 601.7 L370.4 601.1 L364.5 600.9 L358.6 601.1Z M400.3 633.5 L409.5 624.7 L417.2 617.3 L423.7 611.2 L429.3 606.3 L434.1 602.6 L438.4 599.8 L442.5 597.9 L446.6 596.8 L450.9 596.3 L455.7 596.4 L461.2 596.9 L467.6 597.7 L475.3 598.7 L436.5 636.0 L430.4 634.6 L424.4 633.6 L418.4 633.0 L412.4 632.7 L406.3 632.9Z M233.2 641.4 L242.5 632.4 L250.3 624.9 L256.9 618.7 L262.5 613.8 L267.3 610.0 L271.7 607.2 L275.8 605.3 L279.8 604.2 L284.2 603.7 L289.0 603.8 L294.5 604.3 L301.0 605.1 L308.8 606.1 L269.7 643.9 L263.6 642.4 L257.5 641.4 L251.4 640.8 L245.4 640.6 L239.3 640.8Z M279.0 676.3 L288.6 666.9 L296.6 659.0 L303.4 652.5 L309.1 647.3 L314.1 643.4 L318.6 640.4 L322.9 638.4 L327.1 637.2 L331.6 636.7 L336.6 636.8 L342.4 637.3 L349.1 638.1 L357.1 639.2 L316.9 678.8 L310.6 677.4 L304.2 676.3 L297.9 675.7 L291.6 675.5 L285.3 675.7Z M255.8 814.4 L266.5 803.1 L275.5 793.7 L283.1 786.0 L289.5 779.8 L295.1 775.1 L300.2 771.5 L305.0 769.1 L309.8 767.7 L314.9 767.0 L320.7 767.0 L327.2 767.6 L335.0 768.5 L344.2 769.6 L299.2 816.9 L292.0 815.3 L284.7 814.1 L277.5 813.5 L270.3 813.3 L263.1 813.6Z M324.2 723.8 L334.1 713.7 L342.5 705.3 L349.5 698.4 L355.5 692.9 L360.8 688.6 L365.5 685.5 L369.9 683.4 L374.3 682.1 L379.0 681.5 L384.3 681.6 L390.3 682.1 L397.4 683.0 L405.8 684.0 L363.9 726.3 L357.3 724.8 L350.7 723.7 L344.1 723.1 L337.4 722.9 L330.8 723.1Z M209.6 764.6 L219.9 754.0 L228.5 745.1 L235.8 737.8 L242.0 732.0 L247.4 727.5 L252.3 724.2 L256.9 721.9 L261.5 720.6 L266.4 720.0 L271.8 720.0 L278.1 720.5 L285.5 721.4 L294.3 722.5 L251.0 767.1 L244.1 765.5 L237.2 764.4 L230.3 763.7 L223.4 763.6 L216.5 763.8Z M170.4 714.1 L180.2 704.2 L188.5 695.9 L195.5 689.0 L201.5 683.6 L206.6 679.4 L211.3 676.3 L215.7 674.2 L220.1 672.9 L224.7 672.4 L229.9 672.4 L235.9 672.9 L242.9 673.8 L251.3 674.9 L209.7 716.6 L203.2 715.1 L196.6 714.0 L190.0 713.4 L183.5 713.2 L176.9 713.4Z M139.2 647.2 L148.6 638.1 L156.4 630.5 L163.0 624.3 L168.6 619.3 L173.5 615.5 L177.9 612.7 L182.0 610.8 L186.1 609.6 L190.5 609.2 L195.3 609.2 L200.9 609.8 L207.5 610.6 L215.2 611.6 L176.0 649.7 L169.8 648.2 L163.7 647.2 L157.6 646.6 L151.5 646.3 L145.4 646.5Z M106.2 610.1 L115.0 601.7 L122.5 594.6 L128.9 588.8 L134.3 584.1 L139.0 580.5 L143.3 577.8 L147.3 575.9 L151.4 574.8 L155.7 574.3 L160.4 574.3 L165.8 574.7 L172.2 575.5 L179.7 576.5 L141.5 612.6 L135.6 611.2 L129.7 610.2 L123.8 609.6 L117.9 609.4 L112.1 609.6Z M81.0 558.8 L89.4 551.1 L96.5 544.6 L102.6 539.3 L107.8 534.9 L112.5 531.4 L116.7 528.8 L120.8 527.0 L124.8 525.8 L129.1 525.2 L133.8 525.1 L139.2 525.5 L145.5 526.2 L152.8 527.1 L115.3 561.3 L109.6 560.0 L103.9 559.0 L98.2 558.3 L92.5 558.1 L86.8 558.2Z M123.3 344.5 L129.6 340.1 L135.3 336.1 L140.5 332.7 L145.4 329.8 L150.1 327.3 L154.5 325.4 L158.7 323.8 L162.9 322.7 L167.1 322.0 L171.3 321.7 L175.7 321.8 L180.3 322.2 L185.1 323.0 L151.7 347.4 L147.0 346.2 L142.3 345.2 L137.5 344.6 L132.8 344.2 L128.1 344.2Z M183.8 342.0 L190.0 337.6 L195.7 333.7 L201.0 330.3 L205.9 327.4 L210.5 324.9 L214.9 323.0 L219.1 321.4 L223.3 320.3 L227.4 319.6 L231.7 319.3 L236.0 319.4 L240.6 319.8 L245.5 320.6 L212.1 344.9 L207.4 343.6 L202.7 342.7 L198.0 342.0 L193.3 341.7 L188.5 341.7Z M54.6 386.9 L61.3 381.8 L67.3 377.4 L72.7 373.5 L77.7 370.3 L82.4 367.6 L86.8 365.5 L91.0 363.9 L95.2 362.7 L99.5 362.0 L103.8 361.7 L108.4 361.8 L113.3 362.3 L118.7 363.1 L84.3 389.7 L79.4 388.4 L74.4 387.4 L69.5 386.8 L64.5 386.5 L59.6 386.5Z M117.8 385.3 L124.4 380.2 L130.4 375.8 L135.9 372.0 L140.9 368.8 L145.5 366.1 L149.9 364.0 L154.2 362.4 L158.4 361.2 L162.6 360.5 L166.9 360.2 L171.5 360.3 L176.4 360.8 L181.8 361.6 L147.5 388.1 L142.5 386.8 L137.6 385.8 L132.6 385.2 L127.7 384.9 L122.7 384.9Z M163.9 398.0 L170.7 392.7 L176.7 388.2 L182.2 384.2 L187.3 380.9 L191.9 378.2 L196.3 376.0 L200.6 374.4 L204.8 373.2 L209.0 372.5 L213.4 372.2 L218.0 372.4 L223.1 372.8 L228.5 373.6 L194.0 400.8 L188.9 399.5 L183.9 398.5 L178.9 397.9 L173.9 397.6 L168.9 397.6Z M246.2 385.2 L252.9 380.1 L258.8 375.7 L264.3 371.9 L269.3 368.7 L274.0 366.0 L278.4 363.9 L282.6 362.3 L286.8 361.1 L291.0 360.4 L295.4 360.1 L300.0 360.2 L304.9 360.7 L310.2 361.5 L275.9 388.0 L271.0 386.7 L266.0 385.7 L261.1 385.1 L256.1 384.8 L251.2 384.8Z M-16.8 433.3 L-9.7 427.5 L-3.4 422.5 L2.3 418.3 L7.4 414.7 L12.1 411.8 L16.5 409.5 L20.7 407.8 L24.9 406.6 L29.1 405.9 L33.6 405.7 L38.4 405.8 L43.7 406.4 L49.6 407.2 L14.3 436.0 L9.1 434.7 L3.9 433.7 L-1.2 433.1 L-6.4 432.8 L-11.6 432.9Z M40.6 436.1 L47.7 430.3 L54.0 425.3 L59.7 421.0 L64.8 417.4 L69.5 414.5 L73.9 412.2 L78.1 410.5 L82.3 409.3 L86.6 408.6 L91.0 408.3 L95.9 408.5 L101.2 409.0 L107.1 409.9 L71.7 438.8 L66.5 437.5 L61.3 436.5 L56.2 435.9 L51.0 435.6 L45.8 435.7Z M86.7 451.5 L94.0 445.5 L100.4 440.3 L106.1 435.8 L111.3 432.2 L115.9 429.2 L120.3 426.8 L124.5 425.1 L128.7 423.9 L133.0 423.2 L137.5 423.0 L142.4 423.1 L147.9 423.7 L153.9 424.5 L118.3 454.2 L113.0 452.9 L107.8 451.9 L102.5 451.3 L97.2 451.0 L92.0 451.1Z M171.8 437.5 L178.9 431.7 L185.3 426.6 L190.9 422.3 L196.1 418.8 L200.7 415.8 L205.1 413.5 L209.3 411.8 L213.5 410.6 L217.8 409.9 L222.3 409.7 L227.1 409.8 L232.5 410.4 L238.4 411.2 L203.0 440.2 L197.8 438.9 L192.6 437.9 L187.4 437.3 L182.2 437.0 L177.0 437.1Z M246.0 436.4 L253.2 430.6 L259.5 425.6 L265.1 421.3 L270.2 417.7 L274.9 414.8 L279.3 412.5 L283.5 410.8 L287.7 409.6 L292.0 408.9 L296.5 408.7 L301.3 408.8 L306.6 409.3 L312.5 410.2 L277.2 439.2 L272.0 437.8 L266.8 436.9 L261.6 436.2 L256.4 435.9 L251.2 436.0Z M17.2 503.3 L25.0 496.4 L31.8 490.6 L37.7 485.7 L42.9 481.7 L47.5 478.5 L51.9 476.0 L56.0 474.2 L60.1 473.0 L64.4 472.3 L69.1 472.2 L74.2 472.4 L80.0 473.0 L86.7 473.9 L50.1 505.9 L44.7 504.6 L39.2 503.6 L33.7 502.9 L28.2 502.7 L22.7 502.8Z M93.9 496.3 L101.6 489.6 L108.4 483.8 L114.2 479.0 L119.4 475.0 L124.1 471.8 L128.4 469.4 L132.6 467.6 L136.7 466.4 L141.0 465.7 L145.7 465.5 L150.8 465.8 L156.5 466.4 L163.1 467.3 L126.7 498.9 L121.2 497.6 L115.8 496.6 L110.3 496.0 L104.8 495.7 L99.4 495.8Z M162.2 500.5 L170.0 493.7 L176.7 487.9 L182.6 483.0 L187.8 479.0 L192.5 475.8 L196.8 473.3 L200.9 471.5 L205.1 470.3 L209.4 469.7 L214.0 469.5 L219.1 469.8 L224.9 470.4 L231.6 471.3 L195.1 503.1 L189.6 501.8 L184.1 500.8 L178.6 500.1 L173.1 499.9 L167.7 500.0Z M165.7 554.5 L174.0 546.9 L181.0 540.5 L187.1 535.2 L192.3 530.8 L197.0 527.4 L201.2 524.8 L205.3 522.9 L209.4 521.7 L213.6 521.1 L218.4 521.1 L223.7 521.4 L230.0 522.1 L237.2 523.1 L199.8 557.1 L194.1 555.7 L188.4 554.7 L182.7 554.1 L177.1 553.9 L171.4 554.0Z M404.4 307.7 L410.3 303.7 L415.7 300.2 L420.8 297.1 L425.6 294.5 L430.2 292.3 L434.6 290.4 L438.8 289.0 L442.9 288.0 L447.0 287.3 L451.2 287.0 L455.4 287.0 L459.7 287.4 L464.1 288.1 L431.6 310.6 L427.1 309.4 L422.6 308.4 L418.0 307.8 L413.5 307.5 L409.0 307.4Z M300.8 342.0 L307.0 337.6 L312.7 333.7 L317.9 330.3 L322.8 327.4 L327.5 325.0 L331.9 323.0 L336.1 321.5 L340.3 320.4 L344.4 319.7 L348.7 319.4 L353.0 319.4 L357.6 319.9 L362.5 320.6 L329.1 344.9 L324.4 343.7 L319.7 342.7 L315.0 342.1 L310.2 341.7 L305.5 341.7Z M361.6 344.0 L367.8 339.5 L373.5 335.6 L378.7 332.2 L383.7 329.3 L388.3 326.8 L392.7 324.8 L396.9 323.3 L401.1 322.2 L405.3 321.5 L409.5 321.2 L413.9 321.3 L418.5 321.7 L423.3 322.4 L389.9 346.9 L385.2 345.6 L380.5 344.7 L375.8 344.0 L371.0 343.7 L366.3 343.7Z M429.9 333.2 L436.0 328.9 L441.6 325.1 L446.8 321.8 L451.7 319.0 L456.3 316.6 L460.7 314.7 L464.9 313.2 L469.1 312.1 L473.2 311.4 L477.4 311.1 L481.8 311.1 L486.3 311.5 L491.0 312.3 L457.9 336.2 L453.2 334.9 L448.5 333.9 L443.9 333.3 L439.2 333.0 L434.5 333.0Z M468.6 350.7 L474.9 346.1 L480.6 342.1 L485.9 338.7 L490.8 335.7 L495.5 333.2 L499.9 331.2 L504.1 329.7 L508.3 328.6 L512.5 327.9 L516.7 327.6 L521.1 327.6 L525.8 328.0 L530.7 328.8 L497.2 353.6 L492.4 352.3 L487.7 351.4 L482.9 350.7 L478.1 350.4 L473.4 350.4Z M381.6 376.2 L388.1 371.3 L394.1 367.0 L399.5 363.3 L404.5 360.1 L409.1 357.5 L413.5 355.4 L417.8 353.8 L422.0 352.7 L426.2 352.0 L430.5 351.7 L435.1 351.8 L439.9 352.2 L445.1 353.0 L411.0 379.1 L406.1 377.8 L401.2 376.8 L396.3 376.2 L391.4 375.9 L386.5 375.9Z M424.4 394.3 L431.1 389.1 L437.1 384.5 L442.6 380.6 L447.6 377.4 L452.3 374.7 L456.7 372.5 L460.9 370.9 L465.1 369.7 L469.4 369.0 L473.8 368.7 L478.4 368.8 L483.4 369.3 L488.8 370.1 L454.3 397.1 L449.3 395.8 L444.3 394.8 L439.3 394.2 L434.3 393.9 L429.3 393.9Z M491.4 391.1 L498.0 386.0 L504.1 381.5 L509.6 377.6 L514.6 374.4 L519.2 371.7 L523.6 369.6 L527.9 367.9 L532.1 366.8 L536.3 366.1 L540.7 365.8 L545.3 365.9 L550.3 366.3 L555.6 367.1 L521.2 394.0 L516.2 392.7 L511.3 391.7 L506.3 391.1 L501.3 390.7 L496.3 390.8Z M535.3 412.7 L542.2 407.2 L548.4 402.5 L553.9 398.4 L559.0 395.0 L563.7 392.2 L568.1 390.0 L572.3 388.3 L576.5 387.1 L580.7 386.4 L585.2 386.1 L589.9 386.3 L595.0 386.8 L600.6 387.6 L565.8 415.5 L560.7 414.1 L555.6 413.2 L550.5 412.5 L545.4 412.2 L540.4 412.3Z M297.3 390.0 L304.0 384.9 L310.0 380.4 L315.5 376.6 L320.5 373.3 L325.2 370.6 L329.6 368.5 L333.8 366.9 L338.0 365.7 L342.2 365.0 L346.6 364.7 L351.2 364.8 L356.2 365.3 L361.5 366.1 L327.1 392.8 L322.2 391.5 L317.2 390.6 L312.2 389.9 L307.3 389.6 L302.3 389.7Z M326.3 426.1 L333.4 420.4 L339.6 415.5 L345.2 411.3 L350.3 407.8 L355.0 405.0 L359.4 402.7 L363.6 401.0 L367.8 399.8 L372.1 399.1 L376.5 398.8 L381.3 399.0 L386.6 399.5 L392.3 400.3 L357.2 428.8 L352.1 427.5 L346.9 426.5 L341.8 425.9 L336.6 425.6 L331.5 425.7Z M368.7 444.0 L375.9 438.0 L382.3 432.9 L388.0 428.6 L393.1 425.0 L397.8 422.0 L402.2 419.7 L406.4 418.0 L410.6 416.8 L414.8 416.1 L419.3 415.8 L424.2 416.0 L429.6 416.5 L435.6 417.4 L400.1 446.7 L394.8 445.4 L389.6 444.4 L384.4 443.8 L379.2 443.5 L373.9 443.6Z M444.2 438.0 L451.4 432.2 L457.7 427.1 L463.4 422.8 L468.5 419.2 L473.1 416.3 L477.5 414.0 L481.8 412.3 L485.9 411.1 L490.2 410.4 L494.7 410.2 L499.6 410.3 L504.9 410.8 L510.8 411.7 L475.4 440.8 L470.2 439.4 L465.0 438.4 L459.8 437.8 L454.6 437.5 L449.4 437.6Z M567.1 435.6 L574.2 429.8 L580.6 424.8 L586.2 420.5 L591.3 416.9 L596.0 414.0 L600.4 411.7 L604.6 410.0 L608.8 408.8 L613.1 408.1 L617.6 407.9 L622.4 408.0 L627.7 408.5 L633.6 409.4 L598.3 438.3 L593.1 437.0 L587.9 436.0 L582.7 435.4 L577.5 435.1 L572.3 435.2Z M529.8 486.9 L537.4 480.4 L544.1 474.8 L549.9 470.0 L555.1 466.1 L559.8 463.0 L564.1 460.5 L568.3 458.7 L572.4 457.5 L576.7 456.8 L581.3 456.7 L586.4 456.9 L592.1 457.5 L598.6 458.4 L562.3 489.6 L556.9 488.3 L551.4 487.3 L546.0 486.7 L540.6 486.4 L535.2 486.5Z M241.4 347.0 L247.6 342.5 L253.3 338.5 L258.6 335.0 L263.5 332.1 L268.1 329.7 L272.5 327.7 L276.8 326.1 L281.0 325.0 L285.1 324.3 L289.4 324.0 L293.8 324.1 L298.4 324.5 L303.3 325.3 L269.8 349.9 L265.1 348.6 L260.3 347.6 L255.6 347.0 L250.8 346.7 L246.1 346.7Z" fill="#c7c7c8"/>
</g>
</svg><svg width="608" height="841" viewBox="0 0 608 841" style="position:absolute;left:0;top:0">
<line x1="561.6" y1="42.9" x2="540.4" y2="25.4" stroke="#7fb52d" stroke-width="1.6"/>
<line x1="561.6" y1="42.9" x2="562.1" y2="23.5" stroke="#5b8fc8" stroke-width="1.6"/>
<line x1="561.6" y1="42.9" x2="583.7" y2="25.8" stroke="#c2455a" stroke-width="1.6"/>
<circle cx="540.4" cy="25.4" r="7.6" fill="#82b52e"/>
<circle cx="562.1" cy="23.5" r="8" fill="#3f9bf3"/>
<circle cx="583.7" cy="25.8" r="7.6" fill="#d8435b"/>
<text x="540.4" y="29.2" font-family="Liberation Sans" font-weight="bold" font-size="10.5" fill="#1f2a10" text-anchor="middle">Y</text>
<text x="562.1" y="27.3" font-family="Liberation Sans" font-weight="bold" font-size="10.5" fill="#0f2340" text-anchor="middle">Z</text>
<text x="583.7" y="29.6" font-family="Liberation Sans" font-weight="bold" font-size="10.5" fill="#3a0e16" text-anchor="middle">X</text>
<circle cx="540" cy="59.6" r="7.3" fill="#6b4048" stroke="#d04a5c" stroke-width="1.3"/>
<circle cx="561.7" cy="61.7" r="6.6" fill="#414750" stroke="#4f78b0" stroke-width="1"/>
<circle cx="583.3" cy="60" r="7.3" fill="#5c6e33" stroke="#8ccd3a" stroke-width="1.3"/>
<circle cx="588" cy="95" r="12.6" fill="#363636"/>
<circle cx="588" cy="123.3" r="12.6" fill="#363636"/>
<circle cx="588" cy="152.3" r="12.6" fill="#363636"/>
<circle cx="588" cy="180.5" r="12.6" fill="#363636"/>
<circle cx="590.5" cy="92.5" r="4.6" fill="#3a3a3a" stroke="#e0e0e0" stroke-width="1.4"/>
<path d="M588.3 92.5h4.4M590.5 90.3v4.4" stroke="#e0e0e0" stroke-width="1"/>
<path d="M587.2 95.8 L581.8 100.8" stroke="#e0e0e0" stroke-width="1.8" stroke-linecap="round"/>
<path d="M582.5 124.5 C582 121 583.5 121 584.5 123 L584 116.5 C584 115 585.8 115 586 116.5 L586.3 121 L586.5 114.8 C586.6 113.3 588.4 113.3 588.5 114.8 L588.6 121 L589.2 115.5 C589.4 114 591 114.2 591 115.7 L590.8 121.5 L591.8 117.5 C592.1 116.2 593.6 116.5 593.4 118 L592.6 124.5 C592.2 128 590 130 587.5 130 C585 130 583.5 128 582.5 124.5 Z" fill="#e0e0e0"/>
<circle cx="585.2" cy="148.8" r="2.6" fill="none" stroke="#e0e0e0" stroke-width="1.1"/>
<circle cx="590.6" cy="148.8" r="2.6" fill="none" stroke="#e0e0e0" stroke-width="1.1"/>
<circle cx="590.6" cy="148.8" r="0.9" fill="#e0e0e0"/>
<rect x="583.5" y="152.3" width="6.5" height="4.6" rx="0.8" fill="none" stroke="#e0e0e0" stroke-width="1.1"/>
<path d="M590.5 154.6 L594.5 152.3 V157 Z" fill="none" stroke="#e0e0e0" stroke-width="1"/>
<path d="M581.8 154.6 H583.5" stroke="#e0e0e0" stroke-width="1"/>
<path d="M584 175.5 H592 L594.2 186 H581.8 Z M583.2 179 H592.8 M582.5 182.5 H593.5 M586.7 175.5 L586 186 M589.3 175.5 L590 186" fill="none" stroke="#e0e0e0" stroke-width="1"/>
<rect x="601.5" y="10" width="7" height="14" fill="#3a3a3a"/>
<path d="M606.8 13 L603.3 16.9 L606.8 20.8" fill="none" stroke="#c8c8c8" stroke-width="1.2"/>
</svg>
</div>
<div class="r" style="left:608.00px;top:0.00px;width:1.20px;height:841.00px;background:#4c4c4c;border-radius:0;"></div>
<div class="r" style="left:609.20px;top:0.00px;width:2.10px;height:841.00px;background:#0e0e0e;border-radius:0;"></div>
<div class="r" style="left:611.30px;top:0.00px;width:1.80px;height:841.00px;background:#262626;border-radius:0;"></div>
<div id="ne">
<div class="frame" style="left:766.5px;top:106.7px;width:518px;height:305px"></div>
<div class="frame" style="left:766px;top:451.6px;width:540.7px;height:181.1px"></div>
<div class="frame" style="left:834.2px;top:684.6px;width:286.8px;height:170px"></div>
<div class="title" style="left:916.4px;top:118.2px;transform:scaleX(0.9076)">Repeating Pattern</div>
<div class="title" style="left:905.4px;top:466.8px;transform:scaleX(1.0202)">Random Darkening</div>
<div class="title" style="left:851.5px;top:695.4px;transform:scaleX(0.9181)">Extra Threads Bump</div>
<svg class="r" style="left:0;top:0" width="1600" height="841"><defs><linearGradient id="gy" gradientUnits="userSpaceOnUse" x1="1005" y1="0" x2="1217" y2="0"><stop offset="0" stop-color="#dcdc8c"/><stop offset="1" stop-color="#c9c9c9"/></linearGradient><clipPath id="neclip"><rect x="613" y="0" width="987" height="841"/></clipPath></defs><g clip-path="url(#neclip)"><path d="M590 830 C618.6 744.5 691.5 438.3 735 438.3" fill="none" stroke="#6a6ac4" stroke-width="1.3"/>
<path d="M735 438.3 C782.6 369.6 763.5 327.6 783.7 327.8" fill="none" stroke="#6a6ac4" stroke-width="1.3"/>
<path d="M735 438.3 C779.4 528.8 765.1 555.7 783.8 556.3" fill="none" stroke="#6a6ac4" stroke-width="1.3"/>
<path d="M856.00 291.40 C871.05 291.40 871.05 226.50 886.10 226.50" fill="none" stroke="#c0c0c0" stroke-width="1.3"/>
<path d="M856.00 303.00 C867.65 303.00 867.65 325.80 879.30 325.80" fill="none" stroke="#c0c0c0" stroke-width="1.3"/>
<path d="M958.60 188.20 C964.50 188.20 964.50 207.10 970.40 207.10" fill="none" stroke="#c0c0c0" stroke-width="1.3"/>
<path d="M951.60 286.80 C963.75 286.80 963.75 318.90 975.90 318.90" fill="none" stroke="#c0c0c0" stroke-width="1.3"/>
<path d="M1042.90 169.10 C1059.55 169.10 1059.55 308.70 1076.20 308.70" fill="none" stroke="#c0c0c0" stroke-width="1.3"/>
<path d="M1048.00 279.90 C1062.10 279.90 1062.10 320.30 1076.20 320.30" fill="none" stroke="#c0c0c0" stroke-width="1.3"/>
<path d="M1148.20 269.90 C1172.55 269.90 1172.55 363.70 1196.90 363.70" fill="none" stroke="#c0c0c0" stroke-width="1.3"/>
<path d="M1269.00 297.90 C1294.75 297.90 1191.75 595.30 1217.50 595.30" fill="none" stroke="#dadb8e" stroke-width="1.3"/>
<path d="M1005.00 528.70 C1111.25 528.70 1111.25 583.60 1217.50 583.60" fill="none" stroke="url(#gy)" stroke-width="1.3"/>
<path d="M855.90 528.70 C868.25 528.70 868.25 610.50 880.60 610.50" fill="none" stroke="#c0c0c0" stroke-width="1.3"/>
<path d="M1290.80 518.00 C1322.00 518.00 1322.00 691.40 1353.20 691.40" fill="none" stroke="#dadb8e" stroke-width="1.3"/>
<path d="M1290.8 518 C1379.4 529.4 1445.8 786.1 1502 841" fill="none" stroke="#dadb8e" stroke-width="1.3"/>
<path d="M1105.60 756.40 C1229.40 756.40 1229.40 749.40 1353.20 749.40" fill="none" stroke="#6a6ac4" stroke-width="1.3"/>
<path d="M1011.10 747.30 C1022.05 747.30 1022.05 805.20 1033.00 805.20" fill="none" stroke="#c0c0c0" stroke-width="1.3"/>
<path d="M922.70 746.60 C930.80 746.60 930.80 810.70 938.90 810.70" fill="none" stroke="#6a6ac4" stroke-width="1.3"/>
<path d="M400 800 C600 795 700 785 850.1 773.3" fill="none" stroke="#6a6ac4" stroke-width="1.3"/>
<path d="M560 790 C600 800 630 815 660 860" fill="none" stroke="#c0c0c0" stroke-width="1.3"/><circle cx="735" cy="438.3" r="2.4" fill="#6b6bd0"/></g></svg>
<div class="r" style="left:886.10px;top:169.90px;width:72.50px;height:76.50px;background:#2f2f2f;border-radius:3px;box-shadow:0 1px 4px rgba(0,0,0,.55);"></div>
<div class="r" style="left:886.10px;top:169.90px;width:72.50px;height:10.30px;background:#27628a;border-radius:3px 3px 0 0;"></div>
<svg class="r" style="left:890.70px;top:172.85px" width="6" height="5" viewBox="0 0 6 5"><path d="M0.7 1.2 L3 3.5 L5.3 1.2" fill="none" stroke="#e0e0e0" stroke-width="0.9"/></svg>
<div class="t" style="left:898.60px;top:171.93px;font-size:6px;color:#e8e8e8;">Truncated Modulo</div>
<div class="t" style="right:647.90px;top:185.08px;font-size:6px;color:#e3e3e3;">Value</div>
<div class="r" style="left:891.90px;top:197.90px;width:60.70px;height:8.20px;background:#272727;border-radius:2px;"></div>
<div class="t" style="left:894.90px;top:198.88px;font-size:6px;color:#e3e3e3;">Truncated Modulo</div>
<svg class="r" style="left:947.60px;top:200.50px" width="5" height="4" viewBox="0 0 5 4"><path d="M0.8 0.8 L2.5 2.5 L4.2 0.8" fill="none" stroke="#ddd" stroke-width="0.8"/></svg>
<div class="r" style="left:891.90px;top:211.50px;width:6.40px;height:6.60px;background:#4f4f4f;border-radius:1.5px;"></div>
<div class="t" style="left:900.10px;top:211.68px;font-size:6px;color:#e3e3e3;">Clamp</div>
<div class="t" style="left:891.60px;top:223.38px;font-size:6px;color:#e3e3e3;">Value</div>
<div class="r" style="left:891.60px;top:233.30px;width:61.30px;height:10.00px;background:#545454;border-radius:2px;"></div>
<div class="t" style="left:898.10px;top:235.18px;font-size:6px;color:#e3e3e3;">Value</div>
<div class="t" style="right:654.10px;top:235.18px;font-size:6px;color:#e3e3e3;">2.000</div>
<div class="r" style="left:970.40px;top:150.40px;width:72.50px;height:87.30px;background:#2f2f2f;border-radius:3px;box-shadow:0 1px 4px rgba(0,0,0,.55);"></div>
<div class="r" style="left:970.40px;top:150.40px;width:72.50px;height:10.60px;background:#27628a;border-radius:3px 3px 0 0;"></div>
<svg class="r" style="left:975.00px;top:153.50px" width="6" height="5" viewBox="0 0 6 5"><path d="M0.7 1.2 L3 3.5 L5.3 1.2" fill="none" stroke="#e0e0e0" stroke-width="0.9"/></svg>
<div class="t" style="left:982.90px;top:152.58px;font-size:6px;color:#e8e8e8;">Compare</div>
<div class="t" style="right:563.60px;top:165.98px;font-size:6px;color:#e3e3e3;">Value</div>
<div class="r" style="left:976.20px;top:178.90px;width:60.70px;height:8.20px;background:#272727;border-radius:2px;"></div>
<div class="t" style="left:979.20px;top:179.88px;font-size:6px;color:#e3e3e3;">Compare</div>
<svg class="r" style="left:1031.90px;top:181.50px" width="5" height="4" viewBox="0 0 5 4"><path d="M0.8 0.8 L2.5 2.5 L4.2 0.8" fill="none" stroke="#ddd" stroke-width="0.8"/></svg>
<div class="r" style="left:976.20px;top:192.60px;width:6.40px;height:6.60px;background:#4f4f4f;border-radius:1.5px;"></div>
<div class="t" style="left:984.40px;top:192.78px;font-size:6px;color:#e3e3e3;">Clamp</div>
<div class="t" style="left:975.90px;top:203.98px;font-size:6px;color:#e3e3e3;">Value</div>
<div class="r" style="left:975.90px;top:214.40px;width:61.30px;height:10.00px;background:#545454;border-radius:2px;"></div>
<div class="t" style="left:982.40px;top:216.28px;font-size:6px;color:#e3e3e3;">Value</div>
<div class="t" style="right:569.80px;top:216.28px;font-size:6px;color:#e3e3e3;">0.000</div>
<div class="r" style="left:975.90px;top:225.80px;width:61.30px;height:10.00px;background:#545454;border-radius:2px;"></div>
<div class="t" style="left:982.40px;top:227.68px;font-size:6px;color:#e3e3e3;">Epsilon</div>
<div class="t" style="right:569.80px;top:227.68px;font-size:6px;color:#e3e3e3;">0.000</div>
<div class="r" style="left:783.70px;top:273.20px;width:72.30px;height:61.30px;background:#2f2f2f;border-radius:3px;box-shadow:0 1px 4px rgba(0,0,0,.55);"></div>
<div class="r" style="left:783.70px;top:273.20px;width:72.30px;height:10.20px;background:#27628a;border-radius:3px 3px 0 0;"></div>
<svg class="r" style="left:788.30px;top:276.10px" width="6" height="5" viewBox="0 0 6 5"><path d="M0.7 1.2 L3 3.5 L5.3 1.2" fill="none" stroke="#e0e0e0" stroke-width="0.9"/></svg>
<div class="t" style="left:796.20px;top:275.18px;font-size:6px;color:#e8e8e8;">Separate XYZ</div>
<div class="t" style="right:750.50px;top:288.28px;font-size:6px;color:#e3e3e3;">X</div>
<div class="t" style="right:750.50px;top:299.88px;font-size:6px;color:#e3e3e3;">Y</div>
<div class="t" style="right:750.50px;top:311.58px;font-size:6px;color:#e3e3e3;">Z</div>
<div class="t" style="left:789.20px;top:324.68px;font-size:6px;color:#e3e3e3;">Vector</div>
<div class="r" style="left:879.30px;top:269.00px;width:72.30px;height:76.40px;background:#2f2f2f;border-radius:3px;box-shadow:0 1px 4px rgba(0,0,0,.55);"></div>
<div class="r" style="left:879.30px;top:269.00px;width:72.30px;height:10.30px;background:#27628a;border-radius:3px 3px 0 0;"></div>
<svg class="r" style="left:883.90px;top:271.95px" width="6" height="5" viewBox="0 0 6 5"><path d="M0.7 1.2 L3 3.5 L5.3 1.2" fill="none" stroke="#e0e0e0" stroke-width="0.9"/></svg>
<div class="t" style="left:891.80px;top:271.03px;font-size:6px;color:#e8e8e8;">Truncated Modulo</div>
<div class="t" style="right:654.90px;top:283.68px;font-size:6px;color:#e3e3e3;">Value</div>
<div class="r" style="left:885.10px;top:297.00px;width:60.50px;height:8.20px;background:#272727;border-radius:2px;"></div>
<div class="t" style="left:888.10px;top:297.98px;font-size:6px;color:#e3e3e3;">Truncated Modulo</div>
<svg class="r" style="left:940.60px;top:299.60px" width="5" height="4" viewBox="0 0 5 4"><path d="M0.8 0.8 L2.5 2.5 L4.2 0.8" fill="none" stroke="#ddd" stroke-width="0.8"/></svg>
<div class="r" style="left:885.10px;top:311.00px;width:6.40px;height:6.60px;background:#4f4f4f;border-radius:1.5px;"></div>
<div class="t" style="left:893.30px;top:311.18px;font-size:6px;color:#e3e3e3;">Clamp</div>
<div class="t" style="left:884.80px;top:322.68px;font-size:6px;color:#e3e3e3;">Value</div>
<div class="r" style="left:884.80px;top:332.20px;width:61.10px;height:10.00px;background:#545454;border-radius:2px;"></div>
<div class="t" style="left:891.30px;top:334.08px;font-size:6px;color:#e3e3e3;">Value</div>
<div class="t" style="right:661.10px;top:334.08px;font-size:6px;color:#e3e3e3;">2.000</div>
<div class="r" style="left:975.90px;top:261.70px;width:72.10px;height:87.80px;background:#2f2f2f;border-radius:3px;box-shadow:0 1px 4px rgba(0,0,0,.55);"></div>
<div class="r" style="left:975.90px;top:261.70px;width:72.10px;height:10.50px;background:#27628a;border-radius:3px 3px 0 0;"></div>
<svg class="r" style="left:980.50px;top:264.75px" width="6" height="5" viewBox="0 0 6 5"><path d="M0.7 1.2 L3 3.5 L5.3 1.2" fill="none" stroke="#e0e0e0" stroke-width="0.9"/></svg>
<div class="t" style="left:988.40px;top:263.83px;font-size:6px;color:#e8e8e8;">Compare</div>
<div class="t" style="right:558.50px;top:276.78px;font-size:6px;color:#e3e3e3;">Value</div>
<div class="r" style="left:981.70px;top:290.40px;width:60.30px;height:8.20px;background:#272727;border-radius:2px;"></div>
<div class="t" style="left:984.70px;top:291.38px;font-size:6px;color:#e3e3e3;">Compare</div>
<svg class="r" style="left:1037.00px;top:293.00px" width="5" height="4" viewBox="0 0 5 4"><path d="M0.8 0.8 L2.5 2.5 L4.2 0.8" fill="none" stroke="#ddd" stroke-width="0.8"/></svg>
<div class="r" style="left:981.70px;top:303.90px;width:6.40px;height:6.60px;background:#4f4f4f;border-radius:1.5px;"></div>
<div class="t" style="left:989.90px;top:304.08px;font-size:6px;color:#e3e3e3;">Clamp</div>
<div class="t" style="left:981.40px;top:315.78px;font-size:6px;color:#e3e3e3;">Value</div>
<div class="r" style="left:981.40px;top:325.40px;width:60.90px;height:10.00px;background:#545454;border-radius:2px;"></div>
<div class="t" style="left:987.90px;top:327.28px;font-size:6px;color:#e3e3e3;">Value</div>
<div class="t" style="right:564.70px;top:327.28px;font-size:6px;color:#e3e3e3;">0.000</div>
<div class="r" style="left:981.40px;top:337.10px;width:60.90px;height:10.00px;background:#545454;border-radius:2px;"></div>
<div class="t" style="left:987.90px;top:338.98px;font-size:6px;color:#e3e3e3;">Epsilon</div>
<div class="t" style="right:564.70px;top:338.98px;font-size:6px;color:#e3e3e3;">0.000</div>
<div class="r" style="left:1076.20px;top:252.10px;width:72.00px;height:76.90px;background:#2f2f2f;border-radius:3px;box-shadow:0 1px 4px rgba(0,0,0,.55);"></div>
<div class="r" style="left:1076.20px;top:252.10px;width:72.00px;height:10.10px;background:#27628a;border-radius:3px 3px 0 0;"></div>
<svg class="r" style="left:1080.80px;top:254.95px" width="6" height="5" viewBox="0 0 6 5"><path d="M0.7 1.2 L3 3.5 L5.3 1.2" fill="none" stroke="#e0e0e0" stroke-width="0.9"/></svg>
<div class="t" style="left:1088.70px;top:254.03px;font-size:6px;color:#e8e8e8;">Multiply</div>
<div class="t" style="right:458.30px;top:266.78px;font-size:6px;color:#e3e3e3;">Value</div>
<div class="r" style="left:1082.00px;top:280.40px;width:60.20px;height:8.20px;background:#272727;border-radius:2px;"></div>
<div class="t" style="left:1085.00px;top:281.38px;font-size:6px;color:#e3e3e3;">Multiply</div>
<svg class="r" style="left:1137.20px;top:283.00px" width="5" height="4" viewBox="0 0 5 4"><path d="M0.8 0.8 L2.5 2.5 L4.2 0.8" fill="none" stroke="#ddd" stroke-width="0.8"/></svg>
<div class="r" style="left:1082.00px;top:294.30px;width:6.40px;height:6.60px;background:#4f4f4f;border-radius:1.5px;"></div>
<div class="t" style="left:1090.20px;top:294.48px;font-size:6px;color:#e3e3e3;">Clamp</div>
<div class="t" style="left:1081.70px;top:305.58px;font-size:6px;color:#e3e3e3;">Value</div>
<div class="t" style="left:1081.70px;top:317.18px;font-size:6px;color:#e3e3e3;">Value</div>
<div class="r" style="left:1196.90px;top:279.80px;width:72.10px;height:115.90px;background:#2f2f2f;border-radius:3px;box-shadow:0 1px 4px rgba(0,0,0,.55);"></div>
<div class="r" style="left:1196.90px;top:279.80px;width:72.10px;height:10.20px;background:#6b6d1f;border-radius:3px 3px 0 0;"></div>
<svg class="r" style="left:1201.50px;top:282.70px" width="6" height="5" viewBox="0 0 6 5"><path d="M0.7 1.2 L3 3.5 L5.3 1.2" fill="none" stroke="#e0e0e0" stroke-width="0.9"/></svg>
<div class="t" style="left:1209.40px;top:281.78px;font-size:6px;color:#e8e8e8;">Mix</div>
<div class="t" style="right:337.50px;top:294.78px;font-size:6px;color:#e3e3e3;">Result</div>
<div class="r" style="left:1202.70px;top:309.30px;width:60.30px;height:8.20px;background:#272727;border-radius:2px;"></div>
<div class="t" style="left:1205.70px;top:310.28px;font-size:6px;color:#e3e3e3;">Color</div>
<svg class="r" style="left:1258.00px;top:311.90px" width="5" height="4" viewBox="0 0 5 4"><path d="M0.8 0.8 L2.5 2.5 L4.2 0.8" fill="none" stroke="#ddd" stroke-width="0.8"/></svg>
<div class="r" style="left:1202.70px;top:322.40px;width:60.30px;height:8.20px;background:#272727;border-radius:2px;"></div>
<div class="t" style="left:1205.70px;top:323.38px;font-size:6px;color:#e3e3e3;">Mix</div>
<svg class="r" style="left:1258.00px;top:325.00px" width="5" height="4" viewBox="0 0 5 4"><path d="M0.8 0.8 L2.5 2.5 L4.2 0.8" fill="none" stroke="#ddd" stroke-width="0.8"/></svg>
<div class="r" style="left:1202.70px;top:336.20px;width:6.40px;height:6.60px;background:#4f4f4f;border-radius:1.5px;"></div>
<div class="t" style="left:1210.90px;top:336.38px;font-size:6px;color:#e3e3e3;">Clamp Result</div>
<div class="r" style="left:1202.70px;top:349.10px;width:6.40px;height:6.60px;background:#4d7ad0;border-radius:1.5px;"></div>
<svg class="r" style="left:1202.70px;top:349.10px" width="7" height="7" viewBox="0 0 7 7"><path d="M1.3 3.6 L2.8 5.1 L5.6 1.4" fill="none" stroke="#fff" stroke-width="1.1"/></svg>
<div class="t" style="left:1210.90px;top:349.28px;font-size:6px;color:#e3e3e3;">Clamp Factor</div>
<div class="t" style="left:1202.40px;top:360.58px;font-size:6px;color:#e3e3e3;">Factor</div>
<div class="t" style="left:1202.40px;top:372.38px;font-size:6px;color:#e3e3e3;">A</div>
<div class="r" style="left:1230.80px;top:370.90px;width:32.70px;height:9.20px;background:#f7bf6b;border-radius:2px;"></div>
<div class="t" style="left:1202.40px;top:384.48px;font-size:6px;color:#e3e3e3;">B</div>
<div class="r" style="left:1230.80px;top:383.00px;width:32.70px;height:9.20px;background:#ffffff;border-radius:2px;"></div>
<div class="r" style="left:783.80px;top:510.90px;width:72.10px;height:53.30px;background:#2f2f2f;border-radius:3px;box-shadow:0 1px 4px rgba(0,0,0,.55);"></div>
<div class="r" style="left:783.80px;top:510.90px;width:72.10px;height:10.50px;background:#8a4b1f;border-radius:3px 3px 0 0;"></div>
<svg class="r" style="left:788.40px;top:513.95px" width="6" height="5" viewBox="0 0 6 5"><path d="M0.7 1.2 L3 3.5 L5.3 1.2" fill="none" stroke="#e0e0e0" stroke-width="0.9"/></svg>
<div class="t" style="left:796.30px;top:513.03px;font-size:6px;color:#e8e8e8;">White Noise Texture</div>
<div class="t" style="right:750.60px;top:525.58px;font-size:6px;color:#e3e3e3;">Value</div>
<div class="r" style="left:789.60px;top:540.60px;width:60.30px;height:8.20px;background:#272727;border-radius:2px;"></div>
<div class="t" style="left:792.60px;top:541.58px;font-size:6px;color:#e3e3e3;">3D</div>
<svg class="r" style="left:844.90px;top:543.20px" width="5" height="4" viewBox="0 0 5 4"><path d="M0.8 0.8 L2.5 2.5 L4.2 0.8" fill="none" stroke="#ddd" stroke-width="0.8"/></svg>
<div class="t" style="left:789.30px;top:553.18px;font-size:6px;color:#e3e3e3;">Vector</div>
<div class="r" style="left:880.60px;top:510.90px;width:124.40px;height:106.80px;background:#2f2f2f;border-radius:3px;box-shadow:0 1px 4px rgba(0,0,0,.55);"></div>
<div class="r" style="left:880.60px;top:510.90px;width:124.40px;height:10.50px;background:#27628a;border-radius:3px 3px 0 0;"></div>
<svg class="r" style="left:885.20px;top:513.95px" width="6" height="5" viewBox="0 0 6 5"><path d="M0.7 1.2 L3 3.5 L5.3 1.2" fill="none" stroke="#e0e0e0" stroke-width="0.9"/></svg>
<div class="t" style="left:893.10px;top:513.03px;font-size:6px;color:#e8e8e8;">Color Ramp</div>
<div class="t" style="right:601.50px;top:525.58px;font-size:6px;color:#e3e3e3;">Color</div>
<div class="t" style="right:601.50px;top:537.78px;font-size:6px;color:#e3e3e3;">Alpha</div>
<svg class="r" style="left:886px;top:553px" width="120" height="8" viewBox="0 0 120 8"><path d="M1.5 4 H6.5 M4 1.5 V6.5" stroke="#ddd" stroke-width="0.8"/><path d="M15 4 H19" stroke="#ddd" stroke-width="0.8"/><path d="M30.7 2.8 L32.6 4.8 L34.5 2.8" fill="none" stroke="#ddd" stroke-width="0.8"/></svg>
<div class="r" style="left:934.80px;top:553.00px;width:30.20px;height:8.00px;background:#272727;border-radius:2px;"></div>
<div class="t" style="left:937.50px;top:553.98px;font-size:6px;color:#e3e3e3;">RGB</div>
<svg class="r" style="left:959px;top:555.5px" width="5" height="4" viewBox="0 0 5 4"><path d="M0.8 0.8 L2.5 2.5 L4.2 0.8" fill="none" stroke="#ddd" stroke-width="0.8"/></svg>
<div class="r" style="left:965.50px;top:553.00px;width:33.50px;height:8.00px;background:#272727;border-radius:2px;"></div>
<div class="t" style="left:969.00px;top:553.98px;font-size:6px;color:#e3e3e3;">Ease</div>
<svg class="r" style="left:992.5px;top:555.5px" width="5" height="4" viewBox="0 0 5 4"><path d="M0.8 0.8 L2.5 2.5 L4.2 0.8" fill="none" stroke="#ddd" stroke-width="0.8"/></svg>
<div class="r" style="left:886.00px;top:565.60px;width:112.60px;height:9.50px;background:linear-gradient(90deg,#000 0%,#151515 8%,#6a6a6a 25%,#b8b8b8 45%,#ececec 70%,#fff 100%);border-radius:1px;"></div>
<svg class="r" style="left:884px;top:563px" width="120" height="14" viewBox="0 0 120 14"><path d="M2.5 4.5 L4.2 7.5 L0.8 7.5 Z" fill="#888"/><rect x="1" y="9.6" width="4.8" height="3.6" fill="#000"/><rect x="110.6" y="9.8" width="5.2" height="3.6" fill="#fff"/></svg>
<div class="r" style="left:886.00px;top:580.80px;width:31.50px;height:10.00px;background:#545454;border-radius:2px;"></div>
<div class="t" style="left:851.75px;width:100px;text-align:center;top:582.68px;font-size:6px;color:#e3e3e3;">0</div>
<div class="r" style="left:922.50px;top:580.80px;width:76.50px;height:10.00px;background:#545454;border-radius:2px;"></div>
<div class="t" style="left:929.00px;top:582.68px;font-size:6px;color:#e3e3e3;">Pos</div>
<div class="t" style="right:608.00px;top:582.68px;font-size:6px;color:#e3e3e3;">0.004</div>
<div class="r" style="left:886.00px;top:594.10px;width:113.00px;height:9.10px;background:#000000;border-radius:2px;"></div>
<div class="t" style="left:886.10px;top:607.38px;font-size:6px;color:#e3e3e3;">Fac</div>
<div class="r" style="left:1217.50px;top:499.40px;width:73.30px;height:117.00px;background:#2f2f2f;border-radius:3px;box-shadow:0 0 0 1px #e8e8e8,0 1px 4px rgba(0,0,0,.6);"></div>
<div class="r" style="left:1217.50px;top:499.40px;width:73.30px;height:10.70px;background:#6b6d1f;border-radius:3px 3px 0 0;"></div>
<svg class="r" style="left:1222.10px;top:502.55px" width="6" height="5" viewBox="0 0 6 5"><path d="M0.7 1.2 L3 3.5 L5.3 1.2" fill="none" stroke="#e0e0e0" stroke-width="0.9"/></svg>
<div class="t" style="left:1230.00px;top:501.63px;font-size:6px;color:#e8e8e8;">Multiply</div>
<div class="t" style="right:315.70px;top:514.88px;font-size:6px;color:#e3e3e3;">Result</div>
<div class="r" style="left:1223.30px;top:529.30px;width:61.50px;height:8.20px;background:#272727;border-radius:2px;"></div>
<div class="t" style="left:1226.30px;top:530.28px;font-size:6px;color:#e3e3e3;">Color</div>
<svg class="r" style="left:1279.80px;top:531.90px" width="5" height="4" viewBox="0 0 5 4"><path d="M0.8 0.8 L2.5 2.5 L4.2 0.8" fill="none" stroke="#ddd" stroke-width="0.8"/></svg>
<div class="r" style="left:1223.30px;top:542.20px;width:61.50px;height:8.20px;background:#272727;border-radius:2px;"></div>
<div class="t" style="left:1226.30px;top:543.18px;font-size:6px;color:#e3e3e3;">Multiply</div>
<svg class="r" style="left:1279.80px;top:544.80px" width="5" height="4" viewBox="0 0 5 4"><path d="M0.8 0.8 L2.5 2.5 L4.2 0.8" fill="none" stroke="#ddd" stroke-width="0.8"/></svg>
<div class="r" style="left:1223.30px;top:556.10px;width:6.40px;height:6.60px;background:#4f4f4f;border-radius:1.5px;"></div>
<div class="t" style="left:1231.50px;top:556.28px;font-size:6px;color:#e3e3e3;">Clamp Result</div>
<div class="r" style="left:1223.30px;top:568.90px;width:6.40px;height:6.60px;background:#4d7ad0;border-radius:1.5px;"></div>
<svg class="r" style="left:1223.30px;top:568.90px" width="7" height="7" viewBox="0 0 7 7"><path d="M1.3 3.6 L2.8 5.1 L5.6 1.4" fill="none" stroke="#fff" stroke-width="1.1"/></svg>
<div class="t" style="left:1231.50px;top:569.08px;font-size:6px;color:#e3e3e3;">Clamp Factor</div>
<div class="t" style="left:1223.00px;top:580.48px;font-size:6px;color:#e3e3e3;">Factor</div>
<div class="t" style="left:1223.00px;top:592.18px;font-size:6px;color:#e3e3e3;">A</div>
<div class="t" style="left:1223.00px;top:603.78px;font-size:6px;color:#e3e3e3;">B</div>
<div class="r" style="left:1251.30px;top:602.30px;width:34.00px;height:9.20px;background:#d9d9d9;border-radius:2px;"></div>
<div class="r" style="left:850.10px;top:729.00px;width:72.60px;height:96.50px;background:#2f2f2f;border-radius:3px;box-shadow:0 1px 4px rgba(0,0,0,.55);"></div>
<div class="r" style="left:850.10px;top:729.00px;width:72.60px;height:9.70px;background:#3f3f92;border-radius:3px 3px 0 0;"></div>
<svg class="r" style="left:854.70px;top:731.65px" width="6" height="5" viewBox="0 0 6 5"><path d="M0.7 1.2 L3 3.5 L5.3 1.2" fill="none" stroke="#e0e0e0" stroke-width="0.9"/></svg>
<div class="t" style="left:862.60px;top:730.73px;font-size:6px;color:#e8e8e8;">Multiply</div>
<div class="t" style="right:683.80px;top:743.48px;font-size:6px;color:#e3e3e3;">Vector</div>
<div class="r" style="left:855.90px;top:757.80px;width:60.80px;height:8.20px;background:#272727;border-radius:2px;"></div>
<div class="t" style="left:858.90px;top:758.78px;font-size:6px;color:#e3e3e3;">Multiply</div>
<svg class="r" style="left:911.70px;top:760.40px" width="5" height="4" viewBox="0 0 5 4"><path d="M0.8 0.8 L2.5 2.5 L4.2 0.8" fill="none" stroke="#ddd" stroke-width="0.8"/></svg>
<div class="t" style="left:855.60px;top:770.18px;font-size:6px;color:#e3e3e3;">Vector</div>
<div class="t" style="left:855.60px;top:782.38px;font-size:6px;color:#e3e3e3;">Vector</div>
<div class="r" style="left:855.00px;top:791.00px;width:61.80px;height:31.30px;background:#545454;border-radius:2px;"></div><div class="r" style="left:855.00px;top:801.10px;width:61.80px;height:0.60px;background:#3a3a3a;border-radius:0;"></div><div class="r" style="left:855.00px;top:811.50px;width:61.80px;height:0.60px;background:#3a3a3a;border-radius:0;"></div>
<div class="t" style="left:835.90px;width:100px;text-align:center;top:792.88px;font-size:6px;color:#e3e3e3;">9.510</div><div class="t" style="left:835.90px;width:100px;text-align:center;top:803.18px;font-size:6px;color:#e3e3e3;">1.000</div><div class="t" style="left:835.90px;width:100px;text-align:center;top:813.68px;font-size:6px;color:#e3e3e3;">0.000</div>
<div class="r" style="left:938.90px;top:729.60px;width:72.20px;height:130.40px;background:#2f2f2f;border-radius:3px;box-shadow:0 1px 4px rgba(0,0,0,.55);"></div>
<div class="r" style="left:938.90px;top:729.60px;width:72.20px;height:10.10px;background:#8a4b1f;border-radius:3px 3px 0 0;"></div>
<svg class="r" style="left:943.50px;top:732.45px" width="6" height="5" viewBox="0 0 6 5"><path d="M0.7 1.2 L3 3.5 L5.3 1.2" fill="none" stroke="#e0e0e0" stroke-width="0.9"/></svg>
<div class="t" style="left:951.40px;top:731.53px;font-size:6px;color:#e8e8e8;">Noise Texture</div>
<div class="t" style="right:595.40px;top:744.18px;font-size:6px;color:#e3e3e3;">Fac</div>
<div class="t" style="right:595.40px;top:756.28px;font-size:6px;color:#e3e3e3;">Color</div>
<div class="r" style="left:944.70px;top:769.20px;width:60.40px;height:8.20px;background:#272727;border-radius:2px;"></div>
<div class="t" style="left:947.70px;top:770.18px;font-size:6px;color:#e3e3e3;">3D</div>
<svg class="r" style="left:1000.10px;top:771.80px" width="5" height="4" viewBox="0 0 5 4"><path d="M0.8 0.8 L2.5 2.5 L4.2 0.8" fill="none" stroke="#ddd" stroke-width="0.8"/></svg>
<div class="r" style="left:944.70px;top:782.20px;width:60.40px;height:8.20px;background:#272727;border-radius:2px;"></div>
<div class="t" style="left:947.70px;top:783.18px;font-size:6px;color:#e3e3e3;">fBM</div>
<svg class="r" style="left:1000.10px;top:784.80px" width="5" height="4" viewBox="0 0 5 4"><path d="M0.8 0.8 L2.5 2.5 L4.2 0.8" fill="none" stroke="#ddd" stroke-width="0.8"/></svg>
<div class="r" style="left:944.70px;top:795.80px;width:6.40px;height:6.60px;background:#4d7ad0;border-radius:1.5px;"></div>
<svg class="r" style="left:944.70px;top:795.80px" width="7" height="7" viewBox="0 0 7 7"><path d="M1.3 3.6 L2.8 5.1 L5.6 1.4" fill="none" stroke="#fff" stroke-width="1.1"/></svg>
<div class="t" style="left:952.90px;top:795.98px;font-size:6px;color:#e3e3e3;">Normalize</div>
<div class="t" style="left:944.40px;top:807.58px;font-size:6px;color:#e3e3e3;">Vector</div>
<div class="r" style="left:944.40px;top:817.90px;width:61.00px;height:10.00px;background:#545454;border-radius:2px;"></div>
<div class="t" style="left:950.90px;top:819.78px;font-size:6px;color:#e3e3e3;">Scale</div>
<div class="t" style="right:601.60px;top:819.78px;font-size:6px;color:#e3e3e3;">2.690</div>
<div class="r" style="left:944.40px;top:829.30px;width:61.00px;height:10.00px;background:#545454;border-radius:2px;"></div>
<div class="t" style="left:950.90px;top:831.18px;font-size:6px;color:#e3e3e3;">Detail</div>
<div class="t" style="right:601.60px;top:831.18px;font-size:6px;color:#e3e3e3;">2.000</div>
<div class="r" style="left:1033.00px;top:738.50px;width:72.60px;height:86.00px;background:#2f2f2f;border-radius:3px;box-shadow:0 1px 4px rgba(0,0,0,.55);"></div>
<div class="r" style="left:1033.00px;top:738.50px;width:72.60px;height:10.40px;background:#3f3f92;border-radius:3px 3px 0 0;"></div>
<svg class="r" style="left:1037.60px;top:741.50px" width="6" height="5" viewBox="0 0 6 5"><path d="M0.7 1.2 L3 3.5 L5.3 1.2" fill="none" stroke="#e0e0e0" stroke-width="0.9"/></svg>
<div class="t" style="left:1045.50px;top:740.58px;font-size:6px;color:#e8e8e8;">Bump</div>
<div class="t" style="right:500.90px;top:753.28px;font-size:6px;color:#e3e3e3;">Normal</div>
<div class="r" style="left:1038.80px;top:767.30px;width:6.40px;height:6.60px;background:#4f4f4f;border-radius:1.5px;"></div>
<div class="t" style="left:1047.00px;top:767.48px;font-size:6px;color:#e3e3e3;">Invert</div>
<div class="r" style="left:1038.50px;top:777.20px;width:61.40px;height:10.00px;background:#545454;border-radius:2px;"></div>
<div class="r" style="left:1038.50px;top:777.20px;width:30.70px;height:10.00px;background:#4772b3;border-radius:2px 0 0 2px;"></div>
<div class="t" style="left:1045.00px;top:779.08px;font-size:6px;color:#e3e3e3;">Strength</div>
<div class="t" style="right:507.10px;top:779.08px;font-size:6px;color:#e3e3e3;">0.500</div>
<div class="r" style="left:1038.50px;top:788.80px;width:61.40px;height:10.00px;background:#545454;border-radius:2px;"></div>
<div class="t" style="left:1045.00px;top:790.68px;font-size:6px;color:#e3e3e3;">Distance</div>
<div class="t" style="right:507.10px;top:790.68px;font-size:6px;color:#e3e3e3;">0.010</div>
<div class="t" style="left:1038.50px;top:802.08px;font-size:6px;color:#e3e3e3;">Height</div>
<div class="t" style="left:1038.50px;top:814.28px;font-size:6px;color:#e3e3e3;">Normal</div>
<div class="r" style="left:1353.20px;top:661.50px;width:124.90px;height:198.50px;background:#2f2f2f;border-radius:3px;box-shadow:0 1px 4px rgba(0,0,0,.55);"></div>
<div class="r" style="left:1353.20px;top:661.50px;width:124.90px;height:10.80px;background:#2b6a2b;border-radius:3px 3px 0 0;"></div>
<svg class="r" style="left:1357.80px;top:664.70px" width="6" height="5" viewBox="0 0 6 5"><path d="M0.7 1.2 L3 3.5 L5.3 1.2" fill="none" stroke="#e0e0e0" stroke-width="0.9"/></svg>
<div class="t" style="left:1365.70px;top:663.78px;font-size:6px;color:#e8e8e8;">Principled BSDF</div>
<div class="t" style="right:128.40px;top:676.28px;font-size:6px;color:#e3e3e3;">BSDF</div>
<div class="t" style="left:1358.70px;top:688.28px;font-size:6px;color:#e3e3e3;">Base Color</div>
<div class="r" style="left:1358.20px;top:697.80px;width:114.50px;height:10.00px;background:#545454;border-radius:2px;"></div>
<div class="t" style="left:1364.70px;top:699.68px;font-size:6px;color:#e3e3e3;">Metallic</div>
<div class="t" style="right:134.30px;top:699.68px;font-size:6px;color:#e3e3e3;">0.000</div>
<div class="r" style="left:1358.20px;top:709.30px;width:114.50px;height:10.00px;background:#545454;border-radius:2px;"></div>
<div class="r" style="left:1358.20px;top:709.30px;width:88.28px;height:10.00px;background:#4772b3;border-radius:2px 0 0 2px;"></div>
<div class="t" style="left:1364.70px;top:711.18px;font-size:6px;color:#e3e3e3;">Roughness</div>
<div class="t" style="right:134.30px;top:711.18px;font-size:6px;color:#e3e3e3;">0.771</div>
<div class="r" style="left:1358.20px;top:721.50px;width:114.50px;height:10.00px;background:#545454;border-radius:2px;"></div>
<div class="t" style="left:1364.70px;top:723.38px;font-size:6px;color:#e3e3e3;">IOR</div>
<div class="t" style="right:134.30px;top:723.38px;font-size:6px;color:#e3e3e3;">1.500</div>
<div class="r" style="left:1358.20px;top:733.00px;width:114.50px;height:10.00px;background:#545454;border-radius:2px;"></div>
<div class="r" style="left:1358.20px;top:733.00px;width:114.50px;height:10.00px;background:#4772b3;border-radius:2px;"></div>
<div class="t" style="left:1364.70px;top:734.88px;font-size:6px;color:#e3e3e3;">Alpha</div>
<div class="t" style="right:134.30px;top:734.88px;font-size:6px;color:#e3e3e3;">1.000</div>
<div class="t" style="left:1358.70px;top:746.28px;font-size:6px;color:#e3e3e3;">Normal</div>
<svg class="r" style="left:1359.20px;top:757.70px" width="4" height="5" viewBox="0 0 4 5"><path d="M0.9 0.6 L2.9 2.5 L0.9 4.4" fill="none" stroke="#ddd" stroke-width="0.8"/></svg>
<div class="t" style="left:1366.70px;top:757.08px;font-size:6px;color:#e3e3e3;">Diffuse</div>
<svg class="r" style="left:1359.20px;top:768.40px" width="4" height="5" viewBox="0 0 4 5"><path d="M0.9 0.6 L2.9 2.5 L0.9 4.4" fill="none" stroke="#ddd" stroke-width="0.8"/></svg>
<div class="t" style="left:1366.70px;top:767.78px;font-size:6px;color:#e3e3e3;">Subsurface</div>
<svg class="r" style="left:1359.20px;top:778.50px" width="4" height="5" viewBox="0 0 4 5"><path d="M0.9 0.6 L2.9 2.5 L0.9 4.4" fill="none" stroke="#ddd" stroke-width="0.8"/></svg>
<div class="t" style="left:1366.70px;top:777.88px;font-size:6px;color:#e3e3e3;">Specular</div>
<svg class="r" style="left:1359.20px;top:789.00px" width="4" height="5" viewBox="0 0 4 5"><path d="M0.9 0.6 L2.9 2.5 L0.9 4.4" fill="none" stroke="#ddd" stroke-width="0.8"/></svg>
<div class="t" style="left:1366.70px;top:788.38px;font-size:6px;color:#e3e3e3;">Transmission</div>
<svg class="r" style="left:1359.20px;top:799.00px" width="4" height="5" viewBox="0 0 4 5"><path d="M0.9 0.6 L2.9 2.5 L0.9 4.4" fill="none" stroke="#ddd" stroke-width="0.8"/></svg>
<div class="t" style="left:1366.70px;top:798.38px;font-size:6px;color:#e3e3e3;">Coat</div>
<svg class="r" style="left:1359.20px;top:809.80px" width="4" height="5" viewBox="0 0 4 5"><path d="M0.9 0.6 L2.9 2.5 L0.9 4.4" fill="none" stroke="#ddd" stroke-width="0.8"/></svg>
<div class="t" style="left:1366.70px;top:809.18px;font-size:6px;color:#e3e3e3;">Sheen</div>
<svg class="r" style="left:1359.20px;top:820.30px" width="4" height="5" viewBox="0 0 4 5"><path d="M0.9 0.6 L2.9 2.5 L0.9 4.4" fill="none" stroke="#ddd" stroke-width="0.8"/></svg>
<div class="t" style="left:1366.70px;top:819.68px;font-size:6px;color:#e3e3e3;">Emission</div>
<svg class="r" style="left:1359.20px;top:830.40px" width="4" height="5" viewBox="0 0 4 5"><path d="M0.9 0.6 L2.9 2.5 L0.9 4.4" fill="none" stroke="#ddd" stroke-width="0.8"/></svg>
<div class="t" style="left:1366.70px;top:829.78px;font-size:6px;color:#e3e3e3;">Thin Film</div>
<svg class="r" style="left:0;top:0" width="1600" height="841"><circle cx="958.60" cy="188.20" r="2.6" fill="#a1a1a1" stroke="#1a1a1a" stroke-width="0.7"/>
<circle cx="886.10" cy="226.50" r="2.6" fill="#a1a1a1" stroke="#1a1a1a" stroke-width="0.7"/>
<circle cx="886.10" cy="238.30" r="2.6" fill="#a1a1a1" stroke="#1a1a1a" stroke-width="0.7"/>
<circle cx="1042.90" cy="169.10" r="2.6" fill="#a1a1a1" stroke="#1a1a1a" stroke-width="0.7"/>
<circle cx="970.40" cy="207.10" r="2.6" fill="#a1a1a1" stroke="#1a1a1a" stroke-width="0.7"/>
<circle cx="970.40" cy="219.40" r="2.6" fill="#a1a1a1" stroke="#1a1a1a" stroke-width="0.7"/>
<circle cx="970.40" cy="230.80" r="2.6" fill="#a1a1a1" stroke="#1a1a1a" stroke-width="0.7"/>
<circle cx="856.00" cy="291.40" r="2.6" fill="#a1a1a1" stroke="#1a1a1a" stroke-width="0.7"/>
<circle cx="856.00" cy="303.00" r="2.6" fill="#a1a1a1" stroke="#1a1a1a" stroke-width="0.7"/>
<circle cx="856.00" cy="314.70" r="2.6" fill="#a1a1a1" stroke="#1a1a1a" stroke-width="0.7"/>
<circle cx="783.70" cy="327.80" r="2.6" fill="#6363c7" stroke="#1a1a1a" stroke-width="0.7"/>
<circle cx="951.60" cy="286.80" r="2.6" fill="#a1a1a1" stroke="#1a1a1a" stroke-width="0.7"/>
<circle cx="879.30" cy="325.80" r="2.6" fill="#a1a1a1" stroke="#1a1a1a" stroke-width="0.7"/>
<circle cx="879.30" cy="337.20" r="2.6" fill="#a1a1a1" stroke="#1a1a1a" stroke-width="0.7"/>
<circle cx="1048.00" cy="279.90" r="2.6" fill="#a1a1a1" stroke="#1a1a1a" stroke-width="0.7"/>
<circle cx="975.90" cy="318.90" r="2.6" fill="#a1a1a1" stroke="#1a1a1a" stroke-width="0.7"/>
<circle cx="975.90" cy="330.40" r="2.6" fill="#a1a1a1" stroke="#1a1a1a" stroke-width="0.7"/>
<circle cx="975.90" cy="342.10" r="2.6" fill="#a1a1a1" stroke="#1a1a1a" stroke-width="0.7"/>
<circle cx="1148.20" cy="269.90" r="2.6" fill="#a1a1a1" stroke="#1a1a1a" stroke-width="0.7"/>
<circle cx="1076.20" cy="308.70" r="2.6" fill="#a1a1a1" stroke="#1a1a1a" stroke-width="0.7"/>
<circle cx="1076.20" cy="320.30" r="2.6" fill="#a1a1a1" stroke="#1a1a1a" stroke-width="0.7"/>
<circle cx="1269.00" cy="297.90" r="2.6" fill="#c7c729" stroke="#1a1a1a" stroke-width="0.7"/>
<circle cx="1196.90" cy="363.70" r="2.6" fill="#a1a1a1" stroke="#1a1a1a" stroke-width="0.7"/>
<circle cx="1196.90" cy="375.50" r="2.6" fill="#c7c729" stroke="#1a1a1a" stroke-width="0.7"/>
<circle cx="1196.90" cy="387.60" r="2.6" fill="#c7c729" stroke="#1a1a1a" stroke-width="0.7"/>
<circle cx="855.90" cy="528.70" r="2.6" fill="#a1a1a1" stroke="#1a1a1a" stroke-width="0.7"/>
<circle cx="783.80" cy="556.30" r="2.6" fill="#6363c7" stroke="#1a1a1a" stroke-width="0.7"/>
<circle cx="1005.00" cy="528.70" r="2.6" fill="#c7c729" stroke="#1a1a1a" stroke-width="0.7"/>
<circle cx="1005.00" cy="540.90" r="2.6" fill="#a1a1a1" stroke="#1a1a1a" stroke-width="0.7"/>
<circle cx="880.60" cy="610.50" r="2.6" fill="#a1a1a1" stroke="#1a1a1a" stroke-width="0.7"/>
<circle cx="1290.80" cy="518.00" r="2.6" fill="#c7c729" stroke="#1a1a1a" stroke-width="0.7"/>
<circle cx="1217.50" cy="583.60" r="2.6" fill="#a1a1a1" stroke="#1a1a1a" stroke-width="0.7"/>
<circle cx="1217.50" cy="595.30" r="2.6" fill="#c7c729" stroke="#1a1a1a" stroke-width="0.7"/>
<circle cx="1217.50" cy="606.90" r="2.6" fill="#c7c729" stroke="#1a1a1a" stroke-width="0.7"/>
<circle cx="922.70" cy="746.60" r="2.6" fill="#6363c7" stroke="#1a1a1a" stroke-width="0.7"/>
<circle cx="850.10" cy="773.30" r="2.6" fill="#6363c7" stroke="#1a1a1a" stroke-width="0.7"/>
<circle cx="850.10" cy="785.50" r="2.6" fill="#6363c7" stroke="#1a1a1a" stroke-width="0.7"/>
<circle cx="1011.10" cy="747.30" r="2.6" fill="#a1a1a1" stroke="#1a1a1a" stroke-width="0.7"/>
<circle cx="1011.10" cy="759.40" r="2.6" fill="#c7c729" stroke="#1a1a1a" stroke-width="0.7"/>
<circle cx="938.90" cy="810.70" r="2.6" fill="#6363c7" stroke="#1a1a1a" stroke-width="0.7"/>
<circle cx="938.90" cy="822.90" r="2.6" fill="#a1a1a1" stroke="#1a1a1a" stroke-width="0.7"/>
<circle cx="938.90" cy="834.30" r="2.6" fill="#a1a1a1" stroke="#1a1a1a" stroke-width="0.7"/>
<circle cx="1105.60" cy="756.40" r="2.6" fill="#6363c7" stroke="#1a1a1a" stroke-width="0.7"/>
<circle cx="1033.00" cy="782.20" r="2.6" fill="#a1a1a1" stroke="#1a1a1a" stroke-width="0.7"/>
<circle cx="1033.00" cy="793.80" r="2.6" fill="#a1a1a1" stroke="#1a1a1a" stroke-width="0.7"/>
<circle cx="1033.00" cy="805.20" r="2.6" fill="#a1a1a1" stroke="#1a1a1a" stroke-width="0.7"/>
<circle cx="1033.00" cy="817.40" r="2.6" fill="#6363c7" stroke="#1a1a1a" stroke-width="0.7"/>
<circle cx="1478.10" cy="679.40" r="2.6" fill="#63c763" stroke="#1a1a1a" stroke-width="0.7"/>
<circle cx="1353.20" cy="691.40" r="2.6" fill="#c7c729" stroke="#1a1a1a" stroke-width="0.7"/>
<circle cx="1353.20" cy="702.80" r="2.6" fill="#a1a1a1" stroke="#1a1a1a" stroke-width="0.7"/>
<circle cx="1353.20" cy="714.30" r="2.6" fill="#a1a1a1" stroke="#1a1a1a" stroke-width="0.7"/>
<circle cx="1353.20" cy="726.50" r="2.6" fill="#a1a1a1" stroke="#1a1a1a" stroke-width="0.7"/>
<circle cx="1353.20" cy="738.00" r="2.6" fill="#a1a1a1" stroke="#1a1a1a" stroke-width="0.7"/>
<circle cx="1353.20" cy="749.40" r="2.6" fill="#6363c7" stroke="#1a1a1a" stroke-width="0.7"/></svg>
</div>
</body></html>
